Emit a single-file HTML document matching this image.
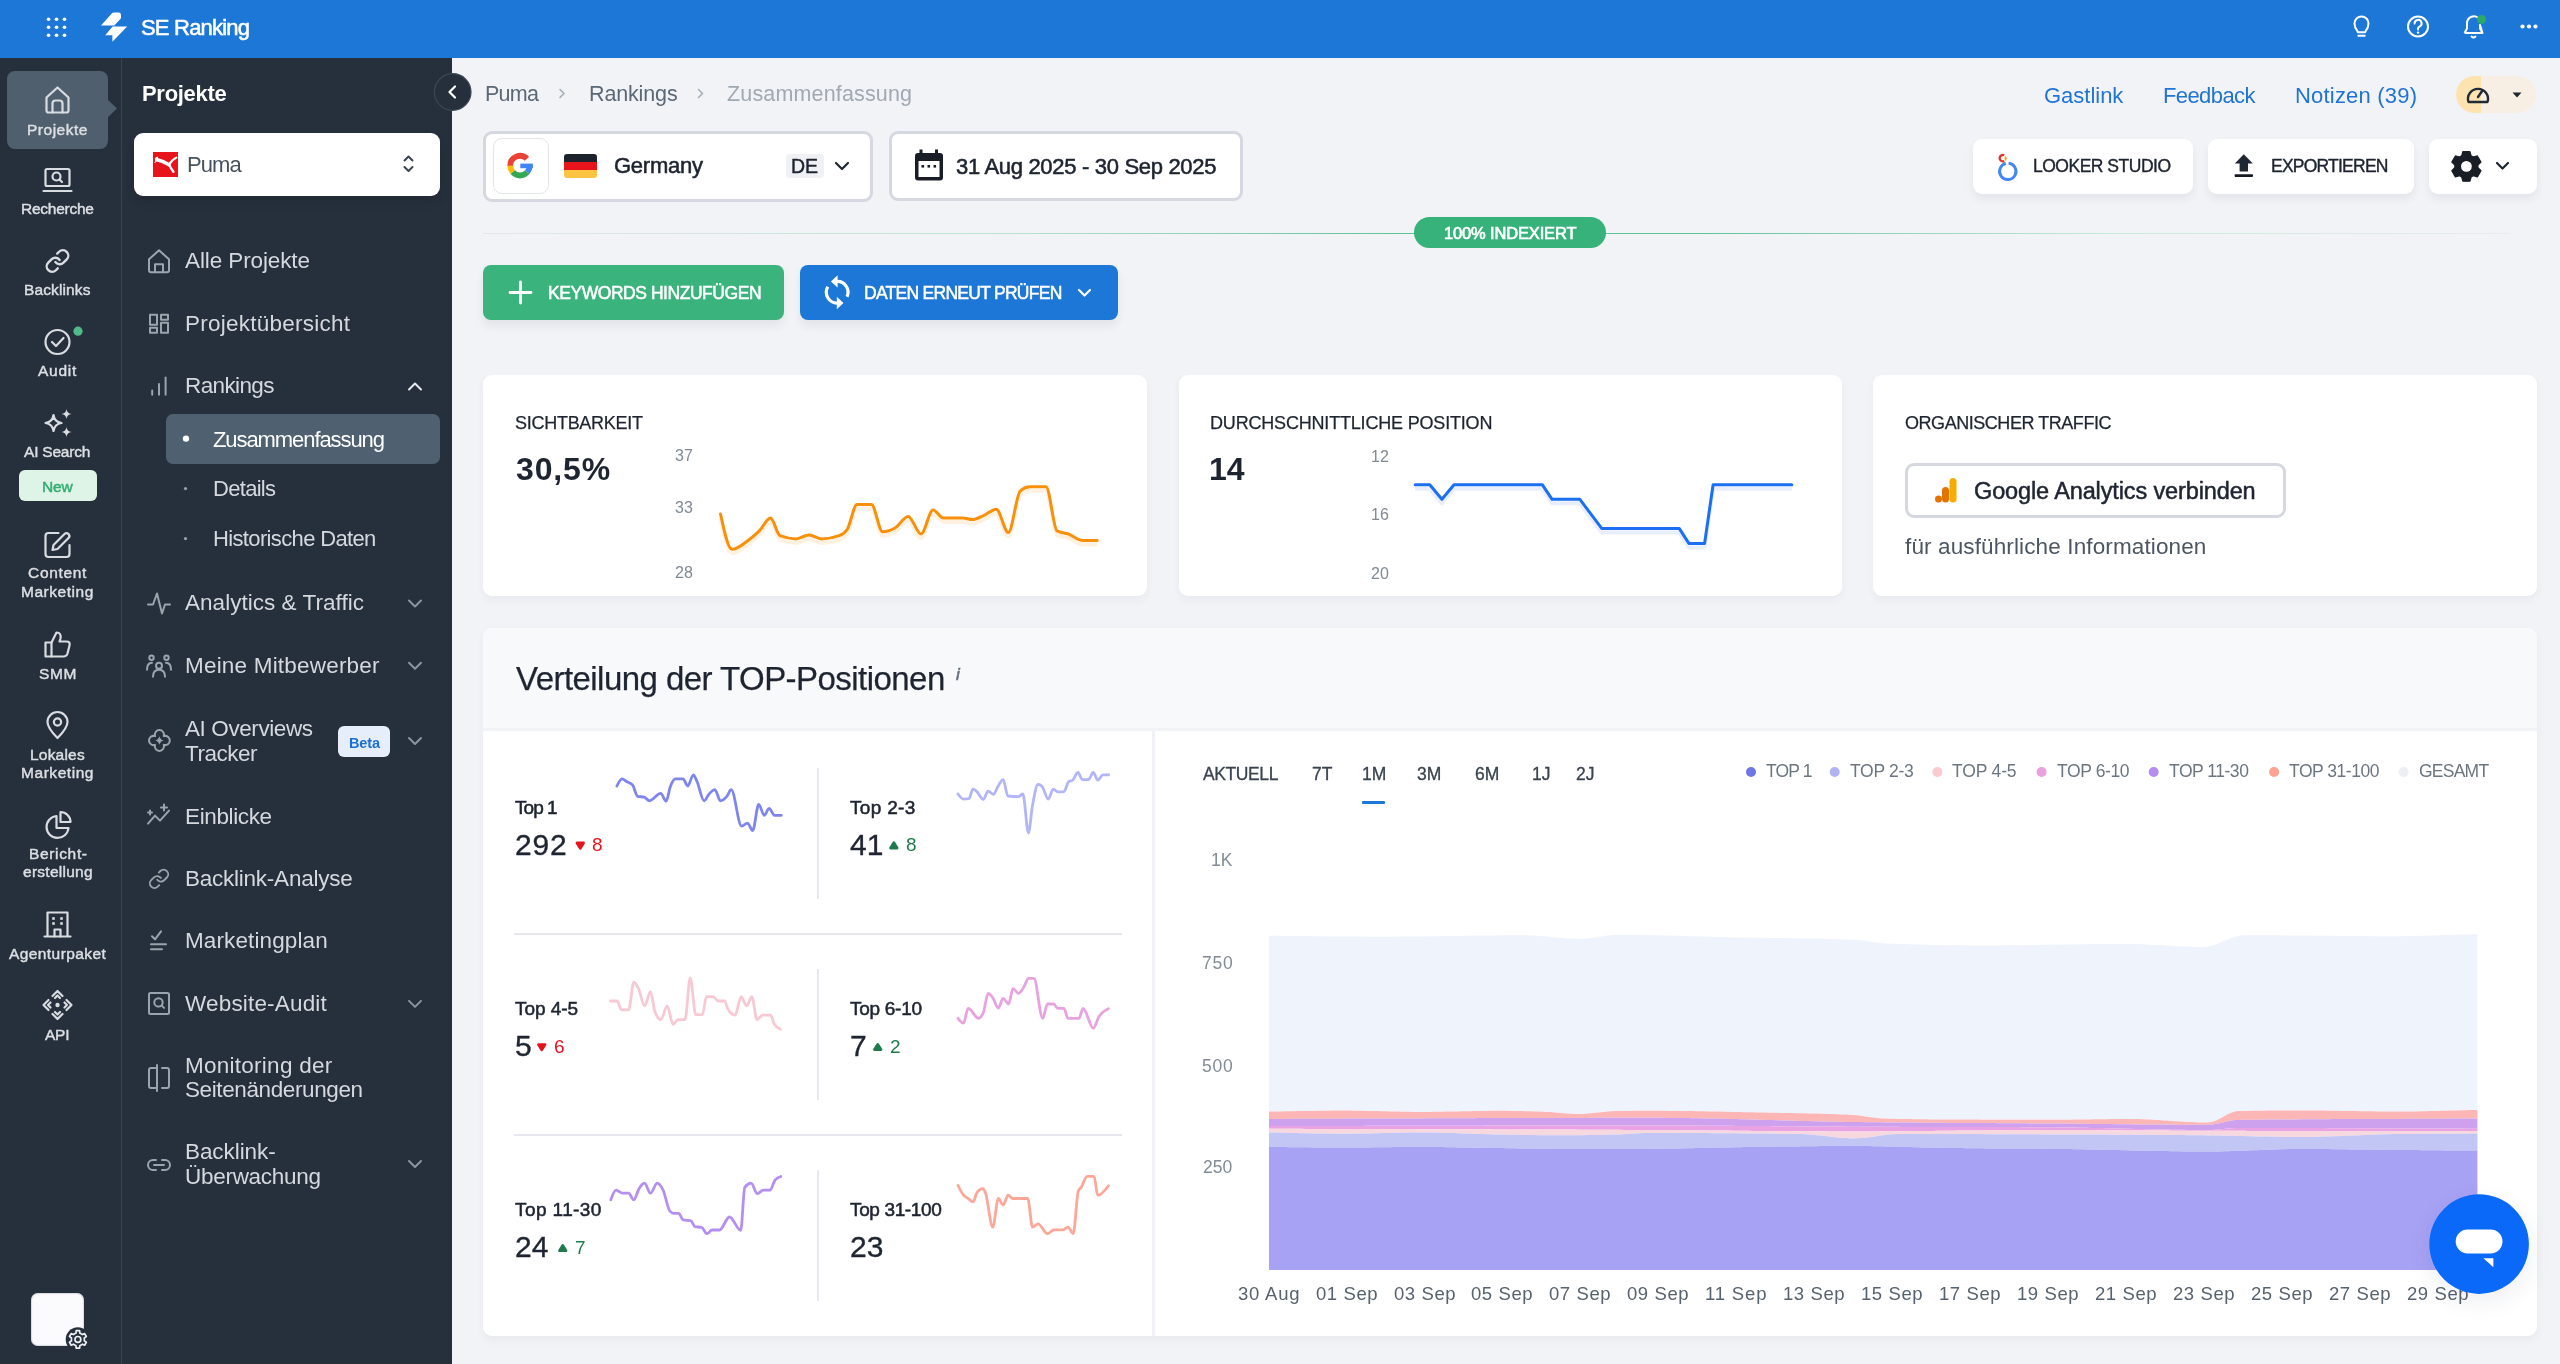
<!DOCTYPE html>
<html><head><meta charset="utf-8"><title>SE Ranking</title>
<style>
html,body{margin:0;padding:0;background:#f2f3f7;}
body{width:2560px;height:1364px;overflow:hidden;position:relative;background:#f2f3f7;font-family:"Liberation Sans",sans-serif;}
.a{position:absolute;display:block;}
.t{position:absolute;white-space:nowrap;will-change:transform;}
svg.a{overflow:visible;}
</style></head><body>
<div class="a" style="left:0px;top:0px;width:2560px;height:58px;background:#1c77d6;"></div>
<svg class="a" style="left:0px;top:0px;" width="80" height="58" viewBox="0 0 80 58"><circle cx="48.5" cy="19.3" r="1.8" fill="#fff"/><circle cx="48.5" cy="27.3" r="1.8" fill="#fff"/><circle cx="48.5" cy="35.3" r="1.8" fill="#fff"/><circle cx="56.5" cy="19.3" r="1.8" fill="#fff"/><circle cx="56.5" cy="27.3" r="1.8" fill="#fff"/><circle cx="56.5" cy="35.3" r="1.8" fill="#fff"/><circle cx="64.5" cy="19.3" r="1.8" fill="#fff"/><circle cx="64.5" cy="27.3" r="1.8" fill="#fff"/><circle cx="64.5" cy="35.3" r="1.8" fill="#fff"/></svg>
<svg class="a" style="left:0px;top:0px;" width="140" height="58" viewBox="0 0 140 58"><path d="M101,25.6 L112.2,13 Q113,12.6 114,12.6 L119,12.6 Q121,12.8 121,15 L121,17.5 Q121,18.5 120.2,19.3 L114.3,25.6 Z" fill="#fff"/><path d="M105.2,35.3 L112.6,26.4 L127.2,26.4 L112.4,41.8 L112.4,35.3 Z" fill="#fff"/></svg>
<div class="t" style="left:140.60px;top:17.48px;font-size:22px;line-height:22px;color:#fff;-webkit-text-stroke:0.55px #fff;letter-spacing:-0.800px;">SE Ranking</div>
<svg class="a" style="left:0px;top:0px;" width="2560" height="58" viewBox="0 0 2560 58"><path d="M2357.3,30.8 Q2354.5,27.5 2354.5,23.5 A7,7 0 0 1 2368.5,23.5 Q2368.5,27.5 2365.7,30.8 L2365.2,32.2 L2357.8,32.2 Z" fill="none" stroke="#fff" stroke-width="2" stroke-linejoin="round"/><line x1="2358.3" y1="35.8" x2="2364.7" y2="35.8" stroke="#fff" stroke-width="2" stroke-linecap="round"/><circle cx="2418" cy="26.5" r="10" fill="none" stroke="#fff" stroke-width="2"/><path d="M2414.6,23.6 A3.5,3.5 0 1 1 2419.5,26.6 Q2418,27.3 2418,29 L2418,29.5" fill="none" stroke="#fff" stroke-width="2" stroke-linecap="round"/><circle cx="2418" cy="32.6" r="1.2" fill="#fff"/><path d="M2464.5,33 L2467,28.5 L2467,23 A7,7 0 0 1 2478,17.5 M2480,25 L2480,28.5 L2482.5,33 Z M2464.5,33 L2482.5,33" fill="none" stroke="#fff" stroke-width="2" stroke-linejoin="round"/><path d="M2471.5,36.5 Q2473.5,38.5 2475.5,36.5" fill="none" stroke="#fff" stroke-width="1.8" stroke-linecap="round"/><circle cx="2481.5" cy="19.5" r="4.6" fill="#2aa96b"/><circle cx="2522.5" cy="26.5" r="2.1" fill="#fff"/><circle cx="2529.0" cy="26.5" r="2.1" fill="#fff"/><circle cx="2535.5" cy="26.5" r="2.1" fill="#fff"/></svg>
<div class="t" style="left:484.70px;top:83.90px;font-size:21.5px;line-height:21.5px;color:#5b6875;letter-spacing:-0.733px;">Puma</div>
<div class="t" style="left:589.00px;top:83.90px;font-size:21.5px;line-height:21.5px;color:#5b6875;letter-spacing:-0.143px;">Rankings</div>
<div class="t" style="left:727.30px;top:83.90px;font-size:21.5px;line-height:21.5px;color:#a0a9b2;letter-spacing:0.157px;">Zusammenfassung</div>
<svg class="a" style="left:0px;top:0px;" width="1000" height="120" viewBox="0 0 1000 120"><path d="M560,89.5 L564,93.5 L560,97.5" fill="none" stroke="#a6aeb6" stroke-width="1.6" stroke-linecap="round" stroke-linejoin="round"/><path d="M698.5,89.5 L702.5,93.5 L698.5,97.5" fill="none" stroke="#a6aeb6" stroke-width="1.6" stroke-linecap="round" stroke-linejoin="round"/></svg>
<div class="t" style="left:2043.50px;top:84.68px;font-size:22px;line-height:22px;color:#1f74d4;letter-spacing:-0.014px;">Gastlink</div>
<div class="t" style="left:2162.50px;top:84.68px;font-size:22px;line-height:22px;color:#1f74d4;letter-spacing:-0.600px;">Feedback</div>
<div class="t" style="left:2295.00px;top:84.68px;font-size:22px;line-height:22px;color:#1f74d4;letter-spacing:0.200px;">Notizen (39)</div>
<div class="a" style="left:2456px;top:76px;width:80px;height:37px;background:#f7efe4;border-radius:19px;overflow:hidden;"></div>
<div class="a" style="left:2456px;top:76px;width:25px;height:37px;background:#fde3b0;border-radius:19px 0 0 19px;"></div>
<svg class="a" style="left:0px;top:0px;" width="2560" height="130" viewBox="0 0 2560 130"><path d="M2468.5,102 A10,10 0 1 1 2487.5,102 Z" fill="none" stroke="#222a35" stroke-width="2.4" stroke-linejoin="round"/><path d="M2478,97 L2482.5,90.5" stroke="#222a35" stroke-width="2.4" stroke-linecap="round"/><path d="M2512.5,92.5 L2521.5,92.5 L2517,97.5 Z" fill="#1f2731"/></svg>
<div class="a" style="left:483px;top:131px;width:390px;height:71px;background:#fff;border:3px solid #d5d7e1;border-radius:9px;box-sizing:border-box;"></div>
<div class="a" style="left:493px;top:138px;width:56px;height:56px;background:#fff;border:1px solid #e3e5ec;border-radius:9px;box-sizing:border-box;"></div>
<svg class="a" style="left:0px;top:0px;" width="900" height="210" viewBox="0 0 900 210"><path d="M526.984,158.816 A9.7,9.7 0 0 0 510.3,165.8" fill="none" stroke="#ea4335" stroke-width="5.8"/><path d="M510.3,165.8 A9.7,9.7 0 0 0 512.725,172.202" fill="none" stroke="#fbbc05" stroke-width="5.8"/><path d="M512.725,172.202 A9.7,9.7 0 0 0 527.275,172.202" fill="none" stroke="#34a853" stroke-width="5.8"/><path d="M527.275,172.202 A9.7,9.7 0 0 0 529.7,165.8" fill="none" stroke="#4285f4" stroke-width="5.8"/><rect x="520.3" y="163.60000000000002" width="12.6" height="4.6" fill="#4285f4"/><clipPath id="fl"><rect x="564" y="154" width="33" height="24" rx="3"/></clipPath><g clip-path="url(#fl)"><rect x="564" y="154" width="33" height="8" fill="#1d232d"/><rect x="564" y="162" width="33" height="8" fill="#e8141b"/><rect x="564" y="170" width="33" height="8" fill="#fcc440"/></g><path d="M836,163 L842,169 L848,163" fill="none" stroke="#1d2633" stroke-width="2.2" stroke-linecap="round" stroke-linejoin="round"/></svg>
<div class="t" style="left:613.60px;top:155.28px;font-size:22px;line-height:22px;color:#1d2430;-webkit-text-stroke:0.55px #1d2430;letter-spacing:-0.250px;">Germany</div>
<div class="a" style="left:786px;top:154px;width:38px;height:24px;background:#f0f1f5;border-radius:4px;"></div>
<div class="t" style="left:791.45px;top:157.39px;font-size:19.5px;line-height:19.5px;color:#1d2430;-webkit-text-stroke:0.45px #1d2430;">DE</div>
<div class="a" style="left:889px;top:131px;width:354px;height:70px;background:#fff;border:3px solid #d5d7e1;border-radius:9px;box-sizing:border-box;"></div>
<svg class="a" style="left:0px;top:0px;" width="1000" height="210" viewBox="0 0 1000 210"><rect x="915" y="153" width="28" height="27.5" rx="3" fill="#181d26"/><rect x="918.5" y="161" width="21" height="16" fill="#fff"/><rect x="919.5" y="149.5" width="3" height="5" fill="#181d26"/><rect x="935" y="149.5" width="3" height="5" fill="#181d26"/><rect x="921.5" y="165" width="2.6" height="2.6" fill="#181d26"/><rect x="927.5" y="165" width="2.6" height="2.6" fill="#181d26"/><rect x="933.5" y="165" width="2.6" height="2.6" fill="#181d26"/></svg>
<div class="t" style="left:956.30px;top:155.78px;font-size:22px;line-height:22px;color:#1d2430;-webkit-text-stroke:0.55px #1d2430;letter-spacing:-0.312px;">31 Aug 2025 - 30 Sep 2025</div>
<div class="a" style="left:1973px;top:139px;width:220px;height:55px;background:#fff;border-radius:9px;box-shadow:0 5px 8px rgba(40,50,80,0.07);"></div>
<div class="a" style="left:2208px;top:139px;width:206px;height:55px;background:#fff;border-radius:9px;box-shadow:0 5px 8px rgba(40,50,80,0.07);"></div>
<div class="a" style="left:2429px;top:139px;width:108px;height:55px;background:#fff;border-radius:9px;box-shadow:0 5px 8px rgba(40,50,80,0.07);"></div>
<svg class="a" style="left:0px;top:0px;" width="2560" height="210" viewBox="0 0 2560 210"><path d="M2005.8,163.4 A8.2,8.2 0 1 0 2008.6,163.2" fill="none" stroke="#4285f4" stroke-width="2.9"/><path d="M2004.2,155.3 A3.2,3.2 0 1 0 2004.2,161.1" fill="none" stroke="#ea2d24" stroke-width="2.3"/><ellipse cx="2005.6" cy="158.4" rx="1.1" ry="2.2" fill="#f9a11b"/><path d="M2243.8,154.3 L2252.8,163.5 L2248,163.5 L2248,171 Q2248,171.6 2247.4,171.6 L2240.2,171.6 Q2239.6,171.6 2239.6,171 L2239.6,163.5 L2234.8,163.5 Z" fill="#1f2732"/><rect x="2234.6" y="174.2" width="18.4" height="2.7" rx="0.8" fill="#141a24"/><path d="M2461.68,155.80 L2462.85,151.62 L2469.95,151.62 L2471.12,155.80 L2473.22,157.02 L2477.43,155.94 L2480.97,162.08 L2477.94,165.19 L2477.94,167.61 L2480.97,170.72 L2477.43,176.86 L2473.22,175.78 L2471.12,177.00 L2469.95,181.18 L2462.85,181.18 L2461.68,177.00 L2459.58,175.78 L2455.37,176.86 L2451.83,170.72 L2454.86,167.61 L2454.86,165.19 L2451.83,162.08 L2455.37,155.94 L2459.58,157.02 Z" fill="#181d26" stroke="#181d26" stroke-width="1.2" stroke-linejoin="round"/><circle cx="2466.4" cy="166.4" r="5.4" fill="#fff"/><path d="M2497,163 L2502.5,168.5 L2508,163" fill="none" stroke="#1d2430" stroke-width="2.2" stroke-linecap="round" stroke-linejoin="round"/></svg>
<div class="t" style="left:2032.60px;top:158.09px;font-size:17.5px;line-height:17.5px;color:#1d2430;-webkit-text-stroke:0.4px #1d2430;letter-spacing:-0.492px;">LOOKER STUDIO</div>
<div class="t" style="left:2271.00px;top:158.09px;font-size:17.5px;line-height:17.5px;color:#1d2430;-webkit-text-stroke:0.4px #1d2430;letter-spacing:-0.770px;">EXPORTIEREN</div>
<div class="a" style="left:483px;top:233px;width:2027px;height:1px;background:linear-gradient(90deg,#e4e6ee 0%,#bfe3cf 25%,#5fc396 45%,#5fc396 60%,#c8e9d7 80%,#e9ebf1 100%);"></div>
<div class="a" style="left:1414px;top:217px;width:192px;height:31px;background:#38b27b;border-radius:16px;"></div>
<div class="t" style="left:1443.55px;top:224.53px;font-size:16.5px;line-height:16.5px;color:#ffffff;-webkit-text-stroke:0.65px #ffffff;letter-spacing:-0.154px;">100% INDEXIERT</div>
<div class="a" style="left:483px;top:265px;width:301px;height:55px;background:#3bb37d;border-radius:8px;box-shadow:0 6px 8px rgba(40,60,80,0.08);"></div>
<div class="a" style="left:800px;top:265px;width:318px;height:55px;background:#1c77d6;border-radius:8px;box-shadow:0 6px 8px rgba(40,60,80,0.08);"></div>
<svg class="a" style="left:0px;top:0px;" width="1200" height="330" viewBox="0 0 1200 330"><path d="M520.5,282 L520.5,303 M510,292.5 L531,292.5" stroke="#fff" stroke-width="2.8" stroke-linecap="round"/><path d="M836.5,281.4 A10.8,10.8 0 0 1 847,296.8" fill="none" stroke="#fff" stroke-width="3.2"/><path d="M827.8,286.8 A10.8,10.8 0 0 0 838,303" fill="none" stroke="#fff" stroke-width="3.2"/><path d="M830.9,281.4 L837.6,275.2 L837.6,287.6 Z" fill="#fff"/><path d="M843.5,303 L836.8,296.8 L836.8,309.2 Z" fill="#fff"/><path d="M1079,290 L1084.5,295.5 L1090,290" fill="none" stroke="#fff" stroke-width="2.2" stroke-linecap="round" stroke-linejoin="round"/></svg>
<div class="t" style="left:548.00px;top:284.79px;font-size:17.5px;line-height:17.5px;color:#ffffff;-webkit-text-stroke:0.5px #ffffff;letter-spacing:-0.450px;">KEYWORDS HINZUFÜGEN</div>
<div class="t" style="left:864.00px;top:284.79px;font-size:17.5px;line-height:17.5px;color:#ffffff;-webkit-text-stroke:0.5px #ffffff;letter-spacing:-0.722px;">DATEN ERNEUT PRÜFEN</div>
<div class="a" style="left:483px;top:375px;width:664px;height:221px;background:#fff;border-radius:9px;box-shadow:0 4px 8px rgba(40,50,80,0.05);"></div>
<div class="a" style="left:1179px;top:375px;width:663px;height:221px;background:#fff;border-radius:9px;box-shadow:0 4px 8px rgba(40,50,80,0.05);"></div>
<div class="a" style="left:1873px;top:375px;width:664px;height:221px;background:#fff;border-radius:9px;box-shadow:0 4px 8px rgba(40,50,80,0.05);"></div>
<div class="t" style="left:515.10px;top:413.66px;font-size:18px;line-height:18px;color:#1e2531;-webkit-text-stroke:0.25px #1e2531;letter-spacing:-0.273px;">SICHTBARKEIT</div>
<div class="t" style="left:515.50px;top:453.21px;font-size:32px;line-height:32px;color:#1e2531;font-weight:700;letter-spacing:0.875px;">30,5%</div>
<div class="t" style="left:675.20px;top:447.96px;font-size:16px;line-height:16px;color:#7f8a94;">37</div>
<div class="t" style="left:675.20px;top:500.26px;font-size:16px;line-height:16px;color:#7f8a94;">33</div>
<div class="t" style="left:675.20px;top:565.36px;font-size:16px;line-height:16px;color:#7f8a94;">28</div>
<svg class="a" style="left:0px;top:0px;" width="1200" height="600" viewBox="0 0 1200 600"><path d="M720.5,514.0 C724.3,531.6 728.2,549.3 732.0,549.3 C737.3,549.3 742.7,544.4 748.0,540.5 C751.8,537.8 755.5,534.7 759.3,530.9 C763.0,527.2 766.8,518.0 770.5,518.0 C773.7,518.0 776.8,534.4 780.0,535.7 C785.3,537.8 790.7,538.9 796.0,538.9 C800.3,538.9 804.6,534.9 808.9,534.9 C813.2,534.9 817.4,538.9 821.7,538.9 C827.6,538.9 833.4,537.8 839.3,535.7 C842.0,534.7 844.6,533.6 847.3,529.3 C850.5,524.1 853.8,504.4 857.0,504.4 C861.8,504.4 866.6,504.4 871.4,504.4 C875.1,504.4 878.9,531.7 882.6,531.7 C886.9,531.7 891.1,530.2 895.4,527.7 C899.7,525.1 903.9,516.4 908.2,516.4 C912.5,516.4 916.7,534.0 921.0,534.0 C925.0,534.0 929.0,510.0 933.0,510.0 C936.5,510.0 939.9,518.0 943.4,518.0 C949.8,518.0 956.3,518.0 962.7,518.0 C965.9,518.0 969.1,519.6 972.3,519.6 C976.5,519.6 980.8,516.7 985.0,514.8 C988.8,513.1 992.5,509.2 996.3,509.2 C1000.3,509.2 1004.3,532.5 1008.3,532.5 C1012.3,532.5 1016.3,494.1 1020.3,490.8 C1023.5,488.1 1026.8,486.8 1030.0,486.8 C1035.3,486.8 1040.7,486.8 1046.0,486.8 C1049.7,486.8 1053.4,528.9 1057.1,530.9 C1060.9,533.0 1064.6,532.7 1068.4,534.0 C1073.2,535.7 1078.0,540.5 1082.8,540.5 C1087.6,540.5 1092.4,540.5 1097.2,540.5" fill="none" stroke="#fef1e0" stroke-width="4" transform="translate(0,4)" stroke-linejoin="round"/><path d="M720.5,514.0 C724.3,531.6 728.2,549.3 732.0,549.3 C737.3,549.3 742.7,544.4 748.0,540.5 C751.8,537.8 755.5,534.7 759.3,530.9 C763.0,527.2 766.8,518.0 770.5,518.0 C773.7,518.0 776.8,534.4 780.0,535.7 C785.3,537.8 790.7,538.9 796.0,538.9 C800.3,538.9 804.6,534.9 808.9,534.9 C813.2,534.9 817.4,538.9 821.7,538.9 C827.6,538.9 833.4,537.8 839.3,535.7 C842.0,534.7 844.6,533.6 847.3,529.3 C850.5,524.1 853.8,504.4 857.0,504.4 C861.8,504.4 866.6,504.4 871.4,504.4 C875.1,504.4 878.9,531.7 882.6,531.7 C886.9,531.7 891.1,530.2 895.4,527.7 C899.7,525.1 903.9,516.4 908.2,516.4 C912.5,516.4 916.7,534.0 921.0,534.0 C925.0,534.0 929.0,510.0 933.0,510.0 C936.5,510.0 939.9,518.0 943.4,518.0 C949.8,518.0 956.3,518.0 962.7,518.0 C965.9,518.0 969.1,519.6 972.3,519.6 C976.5,519.6 980.8,516.7 985.0,514.8 C988.8,513.1 992.5,509.2 996.3,509.2 C1000.3,509.2 1004.3,532.5 1008.3,532.5 C1012.3,532.5 1016.3,494.1 1020.3,490.8 C1023.5,488.1 1026.8,486.8 1030.0,486.8 C1035.3,486.8 1040.7,486.8 1046.0,486.8 C1049.7,486.8 1053.4,528.9 1057.1,530.9 C1060.9,533.0 1064.6,532.7 1068.4,534.0 C1073.2,535.7 1078.0,540.5 1082.8,540.5 C1087.6,540.5 1092.4,540.5 1097.2,540.5" fill="none" stroke="#fa8f0a" stroke-width="3" stroke-linejoin="round" stroke-linecap="round"/></svg>
<div class="t" style="left:1209.90px;top:413.76px;font-size:18px;line-height:18px;color:#1e2531;-webkit-text-stroke:0.25px #1e2531;letter-spacing:-0.184px;">DURCHSCHNITTLICHE POSITION</div>
<div class="t" style="left:1209.40px;top:452.91px;font-size:32px;line-height:32px;color:#1e2531;font-weight:700;">14</div>
<div class="t" style="left:1371.20px;top:448.96px;font-size:16px;line-height:16px;color:#7f8a94;">12</div>
<div class="t" style="left:1371.20px;top:507.46px;font-size:16px;line-height:16px;color:#7f8a94;">16</div>
<div class="t" style="left:1371.20px;top:565.66px;font-size:16px;line-height:16px;color:#7f8a94;">20</div>
<svg class="a" style="left:0px;top:0px;" width="1900" height="600" viewBox="0 0 1900 600"><path d="M1415.2,484.8 L1429.8,484.8 L1441.9,499.3 L1454,484.8 L1542.4,484.8 L1552.1,499.3 L1579.9,499.3 L1601.7,528.4 L1679.2,528.4 L1688.9,543.4 L1704.6,543.4 L1713.1,484.8 L1791.8,484.8" fill="none" stroke="#e9eefc" stroke-width="4" transform="translate(0,4)" stroke-linejoin="round"/><path d="M1415.2,484.8 L1429.8,484.8 L1441.9,499.3 L1454,484.8 L1542.4,484.8 L1552.1,499.3 L1579.9,499.3 L1601.7,528.4 L1679.2,528.4 L1688.9,543.4 L1704.6,543.4 L1713.1,484.8 L1791.8,484.8" fill="none" stroke="#1a6ff2" stroke-width="3" stroke-linejoin="round" stroke-linecap="round"/></svg>
<div class="t" style="left:1904.60px;top:413.96px;font-size:18px;line-height:18px;color:#1e2531;-webkit-text-stroke:0.25px #1e2531;letter-spacing:-0.456px;">ORGANISCHER TRAFFIC</div>
<div class="a" style="left:1905px;top:463px;width:381px;height:55px;background:#fff;border:3px solid #d6d8e1;border-radius:9px;box-sizing:border-box;"></div>
<svg class="a" style="left:0px;top:0px;" width="2300" height="600" viewBox="0 0 2300 600"><rect x="1949.5" y="478" width="7" height="24.5" rx="3.5" fill="#f9ab00"/><rect x="1942" y="487" width="7" height="15.5" rx="3.5" fill="#e37400"/><circle cx="1938.5" cy="499" r="3.5" fill="#e37400"/></svg>
<div class="t" style="left:1974.30px;top:479.61px;font-size:23.5px;line-height:23.5px;color:#1e2531;-webkit-text-stroke:0.5px #1e2531;letter-spacing:-0.124px;">Google Analytics verbinden</div>
<div class="t" style="left:1904.60px;top:535.65px;font-size:22.5px;line-height:22.5px;color:#4b5661;letter-spacing:0.128px;">für ausführliche Informationen</div>
<div class="a" style="left:483px;top:628px;width:2054px;height:708px;background:#fff;border-radius:9px;box-shadow:0 4px 8px rgba(40,50,80,0.05);overflow:hidden;"></div>
<div class="a" style="left:483px;top:628px;width:2054px;height:102px;background:#f8f9fb;border-radius:9px 9px 0 0;"></div>
<div class="a" style="left:483px;top:728px;width:2054px;height:3px;background:#f2f3f7;"></div>
<div class="a" style="left:1152px;top:731px;width:3px;height:605px;background:#f1f2f6;"></div>
<div class="t" style="left:516.40px;top:662.27px;font-size:33px;line-height:33px;color:#1e2531;-webkit-text-stroke:0.25px #1e2531;letter-spacing:-0.546px;">Verteilung der TOP-Positionen</div>
<div class="t" style="left:956.00px;top:665.61px;font-size:17px;line-height:17px;color:#66737f;-webkit-text-stroke:0.6px #66737f;font-style:italic;">i</div>
<div class="a" style="left:514px;top:933px;width:608px;height:2px;background:#e6e7ef;"></div>
<div class="a" style="left:514px;top:1134px;width:608px;height:2px;background:#e6e7ef;"></div>
<div class="a" style="left:817px;top:768px;width:2px;height:131px;background:#e6e7ef;"></div>
<div class="a" style="left:817px;top:969px;width:2px;height:131px;background:#e6e7ef;"></div>
<div class="a" style="left:817px;top:1170px;width:2px;height:131px;background:#e6e7ef;"></div>
<div class="t" style="left:515.30px;top:797.92px;font-size:19px;line-height:19px;color:#1e2531;-webkit-text-stroke:0.55px #1e2531;letter-spacing:-0.950px;">Top 1</div>
<div class="t" style="left:515.30px;top:829.61px;font-size:30px;line-height:30px;color:#1e2531;-webkit-text-stroke:0.35px #1e2531;letter-spacing:0.800px;">292</div>
<div class="t" style="left:592.30px;top:835.22px;font-size:19px;line-height:19px;color:#e5141c;">8</div>
<div class="t" style="left:850.00px;top:797.92px;font-size:19px;line-height:19px;color:#1e2531;-webkit-text-stroke:0.55px #1e2531;letter-spacing:0.317px;">Top 2-3</div>
<div class="t" style="left:850.00px;top:829.61px;font-size:30px;line-height:30px;color:#1e2531;-webkit-text-stroke:0.35px #1e2531;">41</div>
<div class="t" style="left:905.90px;top:835.22px;font-size:19px;line-height:19px;color:#1f7a4c;">8</div>
<div class="t" style="left:515.00px;top:998.52px;font-size:19px;line-height:19px;color:#1e2531;-webkit-text-stroke:0.55px #1e2531;letter-spacing:-0.067px;">Top 4-5</div>
<div class="t" style="left:515.00px;top:1031.20px;font-size:30px;line-height:30px;color:#1e2531;-webkit-text-stroke:0.35px #1e2531;">5</div>
<div class="t" style="left:553.80px;top:1036.82px;font-size:19px;line-height:19px;color:#e5141c;">6</div>
<div class="t" style="left:850.00px;top:998.52px;font-size:19px;line-height:19px;color:#1e2531;-webkit-text-stroke:0.55px #1e2531;letter-spacing:-0.271px;">Top 6-10</div>
<div class="t" style="left:850.00px;top:1031.20px;font-size:30px;line-height:30px;color:#1e2531;-webkit-text-stroke:0.35px #1e2531;">7</div>
<div class="t" style="left:889.80px;top:1036.82px;font-size:19px;line-height:19px;color:#1f7a4c;">2</div>
<div class="t" style="left:515.00px;top:1199.92px;font-size:19px;line-height:19px;color:#1e2531;-webkit-text-stroke:0.55px #1e2531;letter-spacing:0.413px;">Top 11-30</div>
<div class="t" style="left:515.00px;top:1232.31px;font-size:30px;line-height:30px;color:#1e2531;-webkit-text-stroke:0.35px #1e2531;">24</div>
<div class="t" style="left:574.80px;top:1237.92px;font-size:19px;line-height:19px;color:#1f7a4c;">7</div>
<div class="t" style="left:850.00px;top:1199.92px;font-size:19px;line-height:19px;color:#1e2531;-webkit-text-stroke:0.55px #1e2531;letter-spacing:-0.367px;">Top 31-100</div>
<div class="t" style="left:850.00px;top:1232.31px;font-size:30px;line-height:30px;color:#1e2531;-webkit-text-stroke:0.35px #1e2531;">23</div>
<svg class="a" style="left:0px;top:0px;" width="1160" height="1364" viewBox="0 0 1160 1364"><path d="M577.0,843 L583.5,843 L580.25,848.2 Z" fill="#e5141c" stroke="#e5141c" stroke-width="2.8" stroke-linejoin="round"/><path d="M890.6,848 L897.1,848 L893.85,842.8 Z" fill="#1f7a4c" stroke="#1f7a4c" stroke-width="2.8" stroke-linejoin="round"/><path d="M538.5,1044.6 L545.0,1044.6 L541.75,1049.8 Z" fill="#e5141c" stroke="#e5141c" stroke-width="2.8" stroke-linejoin="round"/><path d="M874.5,1049.6 L881.0,1049.6 L877.75,1044.3999999999999 Z" fill="#1f7a4c" stroke="#1f7a4c" stroke-width="2.8" stroke-linejoin="round"/><path d="M559.5,1250.7 L566.0,1250.7 L562.75,1245.5 Z" fill="#1f7a4c" stroke="#1f7a4c" stroke-width="2.8" stroke-linejoin="round"/><path d="M616.9,786.0 C618.6,782.5 620.4,778.9 622.1,778.9 C623.6,778.9 625.0,780.6 626.5,781.5 C628.5,782.7 630.5,782.6 632.5,784.9 C634.2,786.9 636.0,796.0 637.7,796.4 C639.9,796.9 642.1,796.6 644.3,797.1 C646.0,797.5 647.8,800.8 649.5,800.8 C653.2,800.8 657.0,793.4 660.7,793.4 C662.5,793.4 664.4,801.2 666.2,801.2 C667.6,801.2 668.9,790.3 670.3,786.7 C672.0,782.1 673.8,778.9 675.5,778.9 C678.0,778.9 680.5,778.9 683.0,778.9 C684.6,778.9 686.2,786.0 687.8,786.0 C689.6,786.0 691.5,774.8 693.3,774.8 C694.5,774.8 695.8,778.9 697.0,781.5 C699.4,786.5 701.7,800.8 704.1,800.8 C705.7,800.8 707.3,796.0 708.9,794.2 C710.9,792.0 712.9,789.7 714.9,789.7 C716.7,789.7 718.6,800.8 720.4,800.8 C722.5,800.8 724.7,798.9 726.8,796.4 C728.3,794.7 729.7,789.7 731.2,789.7 C734.7,789.7 738.1,826.1 741.6,826.1 C743.6,826.1 745.5,823.1 747.5,823.1 C749.2,823.1 751.0,830.5 752.7,830.5 C754.7,830.5 756.7,804.5 758.7,804.5 C760.5,804.5 762.4,815.3 764.2,815.3 C765.8,815.3 767.5,808.3 769.1,808.3 C770.9,808.3 772.8,815.3 774.6,815.3 C776.8,815.3 779.1,815.3 781.3,815.3" fill="none" stroke="#7e86ee" stroke-width="2.8" stroke-linejoin="round" stroke-linecap="round"/><path d="M958.0,794.0 C959.8,796.5 961.7,799.1 963.5,799.1 C965.3,799.1 967.1,799.0 968.9,798.7 C970.3,798.5 971.6,789.2 973.0,789.2 C974.1,789.2 975.3,790.3 976.4,791.2 C978.7,793.0 981.0,799.4 983.3,799.4 C984.9,799.4 986.5,791.2 988.1,791.2 C989.9,791.2 991.7,794.3 993.5,794.3 C994.9,794.3 996.2,789.3 997.6,787.1 C999.4,784.2 1001.3,779.6 1003.1,779.6 C1004.7,779.6 1006.3,795.8 1007.9,796.0 C1011.3,796.5 1014.7,796.7 1018.1,796.7 C1019.7,796.7 1021.3,794.0 1022.9,794.0 C1024.7,794.0 1026.6,832.9 1028.4,832.9 C1029.8,832.9 1031.1,813.1 1032.5,805.6 C1034.3,795.6 1036.2,784.4 1038.0,784.4 C1039.4,784.4 1040.7,785.1 1042.1,786.4 C1044.1,788.4 1046.2,799.1 1048.2,799.1 C1049.9,799.1 1051.6,789.2 1053.3,789.2 C1054.8,789.2 1056.3,791.9 1057.8,791.9 C1059.8,791.9 1061.9,791.8 1063.9,791.6 C1065.5,791.4 1067.1,783.0 1068.7,781.7 C1070.1,780.6 1071.4,781.1 1072.8,780.0 C1074.5,778.6 1076.2,772.4 1077.9,772.4 C1079.4,772.4 1080.9,779.6 1082.4,779.6 C1084.4,779.6 1086.5,779.6 1088.5,779.6 C1090.1,779.6 1091.7,772.4 1093.3,772.4 C1094.8,772.4 1096.3,780.0 1097.8,780.0 C1099.5,780.0 1101.2,774.8 1102.9,774.8 C1104.8,774.8 1106.8,774.8 1108.7,774.8" fill="none" stroke="#b2b5f6" stroke-width="2.8" stroke-linejoin="round" stroke-linecap="round"/><path d="M610.4,1001.0 C612.6,1001.0 614.9,1001.0 617.1,1001.0 C618.6,1001.0 620.0,1009.9 621.5,1009.9 C623.9,1009.9 626.2,1009.9 628.6,1009.9 C630.3,1009.9 632.1,982.1 633.8,982.1 C635.4,982.1 637.0,985.5 638.6,988.8 C640.6,992.9 642.5,1005.8 644.5,1005.8 C646.5,1005.8 648.5,991.7 650.5,991.7 C652.0,991.7 653.4,1008.0 654.9,1011.8 C656.9,1017.0 658.9,1019.6 660.9,1019.6 C663.0,1019.6 665.1,1005.8 667.2,1005.8 C669.2,1005.8 671.1,1024.4 673.1,1024.4 C674.7,1024.4 676.4,1019.6 678.0,1019.6 C680.3,1019.6 682.7,1019.6 685.0,1019.6 C686.7,1019.6 688.5,978.0 690.2,978.0 C692.1,978.0 693.9,1014.7 695.8,1014.7 C698.0,1014.7 700.2,1014.7 702.4,1014.7 C703.8,1014.7 705.1,996.6 706.5,996.6 C708.7,996.6 711.0,996.6 713.2,996.6 C714.8,996.6 716.4,1001.0 718.0,1001.0 C720.2,1001.0 722.5,1001.0 724.7,1001.0 C725.7,1001.0 726.7,1007.1 727.7,1008.8 C730.2,1013.0 732.6,1015.1 735.1,1015.1 C737.1,1015.1 739.1,996.6 741.1,996.6 C742.9,996.6 744.8,1005.8 746.6,1005.8 C748.3,1005.8 750.1,996.6 751.8,996.6 C753.5,996.6 755.3,1019.6 757.0,1019.6 C758.9,1019.6 760.7,1015.1 762.6,1015.1 C765.2,1015.1 767.8,1015.1 770.4,1015.1 C771.8,1015.1 773.1,1022.2 774.5,1024.4 C776.5,1027.6 778.4,1028.4 780.4,1029.2" fill="none" stroke="#f8c8d3" stroke-width="2.8" stroke-linejoin="round" stroke-linecap="round"/><path d="M958.0,1018.3 C959.8,1020.7 961.7,1023.1 963.5,1023.1 C965.1,1023.1 966.6,1008.4 968.2,1008.4 C971.6,1008.4 975.1,1018.3 978.5,1018.3 C980.1,1018.3 981.7,1016.5 983.3,1012.8 C984.9,1009.1 986.5,993.4 988.1,993.4 C989.7,993.4 991.2,995.7 992.8,997.8 C994.6,1000.3 996.5,1008.1 998.3,1008.1 C999.9,1008.1 1001.5,998.5 1003.1,998.5 C1004.9,998.5 1006.8,1004.0 1008.6,1004.0 C1010.1,1004.0 1011.5,988.6 1013.0,988.6 C1014.8,988.6 1016.7,993.4 1018.5,993.4 C1020.4,993.4 1022.4,989.4 1024.3,986.2 C1025.7,984.0 1027.0,978.3 1028.4,978.3 C1030.2,978.3 1032.1,978.3 1033.9,978.3 C1036.8,978.3 1039.8,1018.3 1042.7,1018.3 C1044.3,1018.3 1045.9,1004.0 1047.5,1004.0 C1049.6,1004.0 1051.6,1004.0 1053.7,1004.0 C1055.1,1004.0 1056.4,1008.4 1057.8,1008.4 C1059.8,1008.4 1061.9,1008.4 1063.9,1008.4 C1065.3,1008.4 1066.6,1018.3 1068.0,1018.3 C1071.7,1018.3 1075.3,1018.3 1079.0,1018.3 C1080.4,1018.3 1081.7,1008.4 1083.1,1008.4 C1086.5,1008.4 1089.9,1028.2 1093.3,1028.2 C1095.1,1028.2 1097.0,1019.9 1098.8,1016.9 C1102.0,1011.7 1105.2,1010.2 1108.4,1008.7" fill="none" stroke="#e8a2e0" stroke-width="2.8" stroke-linejoin="round" stroke-linecap="round"/><path d="M610.8,1199.9 C612.5,1195.1 614.3,1190.2 616.0,1190.2 C618.1,1190.2 620.2,1193.2 622.3,1193.2 C624.4,1193.2 626.5,1193.2 628.6,1193.2 C630.3,1193.2 632.1,1199.9 633.8,1199.9 C635.5,1199.9 637.3,1191.6 639.0,1188.8 C640.8,1185.9 642.7,1183.2 644.5,1183.2 C646.5,1183.2 648.5,1193.2 650.5,1193.2 C652.7,1193.2 655.0,1183.2 657.2,1183.2 C659.2,1183.2 661.1,1186.1 663.1,1190.2 C665.3,1194.9 667.6,1208.2 669.8,1211.0 C671.0,1212.5 672.3,1213.3 673.5,1213.3 C675.2,1213.3 677.0,1213.3 678.7,1213.3 C680.2,1213.3 681.6,1219.6 683.1,1219.9 C685.6,1220.4 688.1,1220.2 690.6,1220.7 C692.1,1221.0 693.5,1226.2 695.0,1226.6 C697.2,1227.1 699.5,1226.9 701.7,1227.4 C703.4,1227.8 705.2,1233.7 706.9,1233.7 C708.6,1233.7 710.4,1230.0 712.1,1230.0 C714.6,1230.0 717.0,1230.0 719.5,1230.0 C722.8,1230.0 726.2,1217.0 729.5,1217.0 C733.2,1217.0 737.0,1230.3 740.7,1230.3 C742.1,1230.3 743.4,1189.1 744.8,1187.3 C746.9,1184.6 749.0,1183.2 751.1,1183.2 C753.2,1183.2 755.3,1193.6 757.4,1193.6 C759.4,1193.6 761.3,1190.2 763.3,1190.2 C765.5,1190.2 767.8,1190.2 770.0,1190.2 C771.7,1190.2 773.5,1181.8 775.2,1179.8 C777.1,1177.6 778.9,1177.0 780.8,1176.5" fill="none" stroke="#b48ef1" stroke-width="2.8" stroke-linejoin="round" stroke-linecap="round"/><path d="M958.0,1185.5 C959.8,1189.2 961.7,1192.9 963.5,1195.1 C965.1,1197.0 966.6,1197.4 968.2,1198.5 C969.8,1199.6 971.4,1201.9 973.0,1201.9 C974.4,1201.9 975.7,1194.0 977.1,1192.3 C979.0,1189.8 981.0,1188.6 982.9,1188.6 C983.7,1188.6 984.5,1190.5 985.3,1192.3 C987.8,1198.0 990.3,1227.2 992.8,1227.2 C994.6,1227.2 996.5,1198.5 998.3,1198.5 C999.9,1198.5 1001.5,1205.0 1003.1,1205.0 C1004.8,1205.0 1006.5,1195.1 1008.2,1195.1 C1009.7,1195.1 1011.2,1198.5 1012.7,1198.5 C1017.7,1198.5 1022.7,1198.5 1027.7,1198.5 C1029.3,1198.5 1030.9,1227.2 1032.5,1227.2 C1034.3,1227.2 1036.2,1223.8 1038.0,1223.8 C1041.2,1223.8 1044.3,1233.7 1047.5,1233.7 C1049.6,1233.7 1051.6,1229.9 1053.7,1229.9 C1056.7,1229.9 1059.6,1229.9 1062.6,1229.9 C1064.4,1229.9 1066.2,1227.2 1068.0,1227.2 C1069.7,1227.2 1071.5,1233.7 1073.2,1233.7 C1074.9,1233.7 1076.6,1195.3 1078.3,1191.0 C1079.2,1188.7 1080.1,1188.9 1081.0,1187.6 C1083.1,1184.6 1085.1,1176.3 1087.2,1176.3 C1089.5,1176.3 1091.7,1176.3 1094.0,1176.3 C1095.3,1176.3 1096.5,1195.4 1097.8,1195.4 C1101.3,1195.4 1104.9,1190.6 1108.4,1185.8" fill="none" stroke="#fca797" stroke-width="2.8" stroke-linejoin="round" stroke-linecap="round"/></svg>
<div class="t" style="left:1202.90px;top:765.79px;font-size:17.5px;line-height:17.5px;color:#38434f;-webkit-text-stroke:0.3px #38434f;letter-spacing:-0.400px;">AKTUELL</div>
<div class="t" style="left:1311.50px;top:765.79px;font-size:17.5px;line-height:17.5px;color:#38434f;-webkit-text-stroke:0.3px #38434f;">7T</div>
<div class="t" style="left:1361.90px;top:765.79px;font-size:17.5px;line-height:17.5px;color:#38434f;-webkit-text-stroke:0.3px #38434f;">1M</div>
<div class="t" style="left:1417.20px;top:765.79px;font-size:17.5px;line-height:17.5px;color:#38434f;-webkit-text-stroke:0.3px #38434f;">3M</div>
<div class="t" style="left:1474.80px;top:765.79px;font-size:17.5px;line-height:17.5px;color:#38434f;-webkit-text-stroke:0.3px #38434f;">6M</div>
<div class="t" style="left:1532.40px;top:765.79px;font-size:17.5px;line-height:17.5px;color:#38434f;-webkit-text-stroke:0.3px #38434f;">1J</div>
<div class="t" style="left:1576.20px;top:765.79px;font-size:17.5px;line-height:17.5px;color:#38434f;-webkit-text-stroke:0.3px #38434f;">2J</div>
<div class="a" style="left:1362px;top:801px;width:23px;height:3px;background:#1c77d6;border-radius:1px;"></div>
<div class="t" style="left:1766.00px;top:763.49px;font-size:17.5px;line-height:17.5px;color:#6b7681;letter-spacing:-0.875px;">TOP 1</div>
<div class="t" style="left:1849.70px;top:763.49px;font-size:17.5px;line-height:17.5px;color:#6b7681;letter-spacing:-0.300px;">TOP 2-3</div>
<div class="t" style="left:1952.40px;top:763.49px;font-size:17.5px;line-height:17.5px;color:#6b7681;letter-spacing:-0.150px;">TOP 4-5</div>
<div class="t" style="left:2056.60px;top:763.49px;font-size:17.5px;line-height:17.5px;color:#6b7681;letter-spacing:-0.386px;">TOP 6-10</div>
<div class="t" style="left:2168.70px;top:763.49px;font-size:17.5px;line-height:17.5px;color:#6b7681;letter-spacing:-0.475px;">TOP 11-30</div>
<div class="t" style="left:2289.10px;top:763.49px;font-size:17.5px;line-height:17.5px;color:#6b7681;letter-spacing:-0.467px;">TOP 31-100</div>
<div class="t" style="left:2418.60px;top:763.49px;font-size:17.5px;line-height:17.5px;color:#6b7681;letter-spacing:-0.760px;">GESAMT</div>
<svg class="a" style="left:0px;top:0px;" width="2560" height="900" viewBox="0 0 2560 900"><circle cx="1751" cy="772" r="5" fill="#7176e6"/><circle cx="1834.7" cy="772" r="5" fill="#b0b4f4"/><circle cx="1937.4" cy="772" r="5" fill="#f9cbd0"/><circle cx="2041.6" cy="772" r="5" fill="#e8a1e0"/><circle cx="2153.7" cy="772" r="5" fill="#b38df0"/><circle cx="2274.1" cy="772" r="5" fill="#fba392"/><circle cx="2403.6" cy="772" r="5" fill="#eceef5"/></svg>
<div class="t" style="left:1211.30px;top:851.69px;font-size:17.5px;line-height:17.5px;color:#828c96;">1K</div>
<div class="t" style="left:1202.00px;top:954.99px;font-size:17.5px;line-height:17.5px;color:#828c96;letter-spacing:0.750px;">750</div>
<div class="t" style="left:1201.90px;top:1058.19px;font-size:17.5px;line-height:17.5px;color:#828c96;letter-spacing:0.800px;">500</div>
<div class="t" style="left:1203.40px;top:1159.19px;font-size:17.5px;line-height:17.5px;color:#828c96;letter-spacing:0.050px;">250</div>
<div class="t" style="left:1237.65px;top:1284.84px;font-size:18.5px;line-height:18.5px;color:#56626e;letter-spacing:0.780px;">30 Aug</div>
<div class="t" style="left:1315.59px;top:1284.84px;font-size:18.5px;line-height:18.5px;color:#56626e;letter-spacing:0.580px;">01 Sep</div>
<div class="t" style="left:1393.53px;top:1284.84px;font-size:18.5px;line-height:18.5px;color:#56626e;letter-spacing:0.580px;">03 Sep</div>
<div class="t" style="left:1471.47px;top:1284.84px;font-size:18.5px;line-height:18.5px;color:#56626e;letter-spacing:0.580px;">05 Sep</div>
<div class="t" style="left:1549.41px;top:1284.84px;font-size:18.5px;line-height:18.5px;color:#56626e;letter-spacing:0.580px;">07 Sep</div>
<div class="t" style="left:1627.35px;top:1284.84px;font-size:18.5px;line-height:18.5px;color:#56626e;letter-spacing:0.580px;">09 Sep</div>
<div class="t" style="left:1705.29px;top:1284.84px;font-size:18.5px;line-height:18.5px;color:#56626e;letter-spacing:0.840px;">11 Sep</div>
<div class="t" style="left:1783.23px;top:1284.84px;font-size:18.5px;line-height:18.5px;color:#56626e;letter-spacing:0.580px;">13 Sep</div>
<div class="t" style="left:1861.17px;top:1284.84px;font-size:18.5px;line-height:18.5px;color:#56626e;letter-spacing:0.580px;">15 Sep</div>
<div class="t" style="left:1939.11px;top:1284.84px;font-size:18.5px;line-height:18.5px;color:#56626e;letter-spacing:0.580px;">17 Sep</div>
<div class="t" style="left:2017.05px;top:1284.84px;font-size:18.5px;line-height:18.5px;color:#56626e;letter-spacing:0.580px;">19 Sep</div>
<div class="t" style="left:2094.99px;top:1284.84px;font-size:18.5px;line-height:18.5px;color:#56626e;letter-spacing:0.580px;">21 Sep</div>
<div class="t" style="left:2172.93px;top:1284.84px;font-size:18.5px;line-height:18.5px;color:#56626e;letter-spacing:0.580px;">23 Sep</div>
<div class="t" style="left:2250.87px;top:1284.84px;font-size:18.5px;line-height:18.5px;color:#56626e;letter-spacing:0.580px;">25 Sep</div>
<div class="t" style="left:2328.81px;top:1284.84px;font-size:18.5px;line-height:18.5px;color:#56626e;letter-spacing:0.580px;">27 Sep</div>
<div class="t" style="left:2406.75px;top:1284.84px;font-size:18.5px;line-height:18.5px;color:#56626e;letter-spacing:0.580px;">29 Sep</div>
<svg class="a" style="left:0px;top:0px;" width="2560" height="1364" viewBox="0 0 2560 1364"><path d="M1269.0,935.7 L1273.0,935.7 L1277.1,935.8 L1281.1,935.8 L1285.1,935.9 L1289.1,935.9 L1293.2,935.9 L1297.2,936.0 L1301.2,936.0 L1305.3,936.1 L1309.3,936.1 L1313.3,936.2 L1317.3,936.2 L1321.4,936.3 L1325.4,936.3 L1329.4,936.4 L1333.4,936.4 L1337.5,936.4 L1341.5,936.5 L1345.5,936.5 L1349.6,936.5 L1353.6,936.6 L1357.6,936.6 L1361.6,936.6 L1365.7,936.7 L1369.7,936.7 L1373.7,936.7 L1377.8,936.7 L1381.8,936.7 L1385.8,936.7 L1389.8,936.7 L1393.9,936.7 L1397.9,936.7 L1401.9,936.6 L1406.0,936.6 L1410.0,936.6 L1414.0,936.5 L1418.0,936.5 L1422.1,936.4 L1426.1,936.4 L1430.1,936.3 L1434.1,936.3 L1438.2,936.2 L1442.2,936.1 L1446.2,936.1 L1450.3,936.0 L1454.3,935.9 L1458.3,935.9 L1462.3,935.8 L1466.4,935.7 L1470.4,935.7 L1474.4,935.6 L1478.5,935.6 L1482.5,935.5 L1486.5,935.5 L1490.5,935.4 L1494.6,935.4 L1498.6,935.3 L1502.6,935.3 L1506.7,935.3 L1510.7,935.2 L1514.7,935.2 L1518.7,935.2 L1522.8,935.2 L1526.8,935.3 L1530.8,935.4 L1534.8,935.6 L1538.9,935.9 L1542.9,936.3 L1546.9,936.6 L1551.0,937.0 L1555.0,937.4 L1559.0,937.8 L1563.0,938.1 L1567.1,938.4 L1571.1,938.6 L1575.1,938.8 L1579.2,938.8 L1583.2,938.7 L1587.2,938.4 L1591.2,937.9 L1595.3,937.4 L1599.3,936.8 L1603.3,936.2 L1607.4,935.6 L1611.4,935.2 L1615.4,934.8 L1619.4,934.7 L1623.5,934.7 L1627.5,934.7 L1631.5,934.8 L1635.5,934.8 L1639.6,934.9 L1643.6,934.9 L1647.6,935.0 L1651.7,935.1 L1655.7,935.2 L1659.7,935.3 L1663.7,935.4 L1667.8,935.5 L1671.8,935.6 L1675.8,935.7 L1679.9,935.8 L1683.9,936.0 L1687.9,936.1 L1691.9,936.2 L1696.0,936.3 L1700.0,936.5 L1704.0,936.6 L1708.1,936.7 L1712.1,936.8 L1716.1,936.9 L1720.1,937.0 L1724.2,937.1 L1728.2,937.2 L1732.2,937.3 L1736.2,937.4 L1740.3,937.5 L1744.3,937.5 L1748.3,937.6 L1752.4,937.7 L1756.4,937.7 L1760.4,937.8 L1764.4,937.8 L1768.5,937.9 L1772.5,937.9 L1776.5,938.0 L1780.6,938.0 L1784.6,938.1 L1788.6,938.2 L1792.6,938.2 L1796.7,938.3 L1800.7,938.3 L1804.7,938.4 L1808.8,938.5 L1812.8,938.6 L1816.8,938.6 L1820.8,938.7 L1824.9,938.8 L1828.9,938.9 L1832.9,939.0 L1836.9,939.2 L1841.0,939.3 L1845.0,939.4 L1849.0,939.6 L1853.1,939.7 L1857.1,939.9 L1861.1,940.3 L1865.1,940.8 L1869.2,941.4 L1873.2,942.0 L1877.2,942.6 L1881.3,943.1 L1885.3,943.4 L1889.3,943.5 L1893.3,943.7 L1897.4,943.8 L1901.4,944.0 L1905.4,944.1 L1909.5,944.2 L1913.5,944.4 L1917.5,944.5 L1921.5,944.6 L1925.6,944.7 L1929.6,944.8 L1933.6,944.9 L1937.6,945.0 L1941.7,945.0 L1945.7,945.1 L1949.7,945.2 L1953.8,945.2 L1957.8,945.3 L1961.8,945.3 L1965.8,945.3 L1969.9,945.4 L1973.9,945.4 L1977.9,945.4 L1982.0,945.4 L1986.0,945.4 L1990.0,945.4 L1994.0,945.4 L1998.1,945.4 L2002.1,945.3 L2006.1,945.3 L2010.2,945.3 L2014.2,945.2 L2018.2,945.2 L2022.2,945.1 L2026.3,945.1 L2030.3,945.0 L2034.3,945.0 L2038.3,944.9 L2042.4,944.8 L2046.4,944.8 L2050.4,944.7 L2054.5,944.7 L2058.5,944.6 L2062.5,944.5 L2066.5,944.5 L2070.6,944.4 L2074.6,944.3 L2078.6,944.3 L2082.7,944.2 L2086.7,944.2 L2090.7,944.1 L2094.7,944.1 L2098.8,944.0 L2102.8,944.0 L2106.8,944.0 L2110.9,943.9 L2114.9,943.9 L2118.9,943.9 L2122.9,943.9 L2127.0,943.9 L2131.0,943.9 L2135.0,944.0 L2139.0,944.1 L2143.1,944.3 L2147.1,944.4 L2151.1,944.7 L2155.2,944.9 L2159.2,945.1 L2163.2,945.3 L2167.2,945.6 L2171.3,945.8 L2175.3,946.1 L2179.3,946.3 L2183.4,946.5 L2187.4,946.7 L2191.4,946.8 L2195.4,946.9 L2199.5,947.0 L2203.5,947.0 L2207.5,946.6 L2211.6,945.8 L2215.6,944.4 L2219.6,942.9 L2223.6,941.1 L2227.7,939.4 L2231.7,937.8 L2235.7,936.5 L2239.7,935.6 L2243.8,935.2 L2247.8,935.2 L2251.8,935.2 L2255.9,935.2 L2259.9,935.2 L2263.9,935.2 L2267.9,935.3 L2272.0,935.3 L2276.0,935.3 L2280.0,935.3 L2284.1,935.4 L2288.1,935.4 L2292.1,935.4 L2296.1,935.5 L2300.2,935.5 L2304.2,935.6 L2308.2,935.6 L2312.3,935.6 L2316.3,935.7 L2320.3,935.7 L2324.3,935.8 L2328.4,935.8 L2332.4,935.8 L2336.4,935.9 L2340.4,935.9 L2344.5,936.0 L2348.5,936.0 L2352.5,936.0 L2356.6,936.1 L2360.6,936.1 L2364.6,936.1 L2368.6,936.1 L2372.7,936.2 L2376.7,936.2 L2380.7,936.2 L2384.8,936.2 L2388.8,936.2 L2392.8,936.2 L2396.8,936.2 L2400.9,936.2 L2404.9,936.1 L2408.9,936.1 L2413.0,936.0 L2417.0,935.9 L2421.0,935.8 L2425.0,935.7 L2429.1,935.6 L2433.1,935.5 L2437.1,935.4 L2441.1,935.3 L2445.2,935.1 L2449.2,935.0 L2453.2,934.9 L2457.3,934.8 L2461.3,934.6 L2465.3,934.5 L2469.3,934.4 L2473.4,934.3 L2477.4,934.2 L2477.4,1109.9 L2473.4,1110.0 L2469.3,1110.1 L2465.3,1110.2 L2461.3,1110.3 L2457.3,1110.4 L2453.2,1110.5 L2449.2,1110.6 L2445.2,1110.7 L2441.1,1110.8 L2437.1,1110.9 L2433.1,1111.0 L2429.1,1111.1 L2425.0,1111.2 L2421.0,1111.3 L2417.0,1111.4 L2413.0,1111.4 L2408.9,1111.5 L2404.9,1111.5 L2400.9,1111.5 L2396.8,1111.5 L2392.8,1111.5 L2388.8,1111.5 L2384.8,1111.4 L2380.7,1111.4 L2376.7,1111.4 L2372.7,1111.3 L2368.6,1111.3 L2364.6,1111.2 L2360.6,1111.2 L2356.6,1111.1 L2352.5,1111.0 L2348.5,1111.0 L2344.5,1110.9 L2340.4,1110.9 L2336.4,1110.8 L2332.4,1110.7 L2328.4,1110.7 L2324.3,1110.6 L2320.3,1110.6 L2316.3,1110.6 L2312.3,1110.5 L2308.2,1110.5 L2304.2,1110.5 L2300.2,1110.5 L2296.1,1110.5 L2292.1,1110.5 L2288.1,1110.5 L2284.1,1110.5 L2280.0,1110.6 L2276.0,1110.6 L2272.0,1110.6 L2267.9,1110.6 L2263.9,1110.7 L2259.9,1110.7 L2255.9,1110.8 L2251.8,1110.8 L2247.8,1110.9 L2243.8,1110.9 L2239.7,1111.0 L2235.7,1111.2 L2231.7,1112.4 L2227.7,1114.2 L2223.6,1116.4 L2219.6,1118.7 L2215.6,1120.7 L2211.6,1122.1 L2207.5,1122.5 L2203.5,1122.5 L2199.5,1122.4 L2195.4,1122.3 L2191.4,1122.1 L2187.4,1121.9 L2183.4,1121.7 L2179.3,1121.4 L2175.3,1121.2 L2171.3,1120.9 L2167.2,1120.6 L2163.2,1120.4 L2159.2,1120.1 L2155.2,1119.9 L2151.1,1119.6 L2147.1,1119.4 L2143.1,1119.3 L2139.0,1119.1 L2135.0,1119.0 L2131.0,1119.0 L2127.0,1119.0 L2122.9,1119.0 L2118.9,1119.0 L2114.9,1119.1 L2110.9,1119.1 L2106.8,1119.2 L2102.8,1119.2 L2098.8,1119.3 L2094.7,1119.3 L2090.7,1119.4 L2086.7,1119.4 L2082.7,1119.5 L2078.6,1119.6 L2074.6,1119.6 L2070.6,1119.7 L2066.5,1119.7 L2062.5,1119.7 L2058.5,1119.8 L2054.5,1119.8 L2050.4,1119.8 L2046.4,1119.8 L2042.4,1119.8 L2038.3,1119.8 L2034.3,1119.8 L2030.3,1119.8 L2026.3,1119.8 L2022.2,1119.8 L2018.2,1119.8 L2014.2,1119.8 L2010.2,1119.8 L2006.1,1119.7 L2002.1,1119.7 L1998.1,1119.7 L1994.0,1119.7 L1990.0,1119.7 L1986.0,1119.7 L1982.0,1119.7 L1977.9,1119.6 L1973.9,1119.6 L1969.9,1119.6 L1965.8,1119.6 L1961.8,1119.6 L1957.8,1119.5 L1953.8,1119.5 L1949.7,1119.5 L1945.7,1119.5 L1941.7,1119.4 L1937.6,1119.4 L1933.6,1119.4 L1929.6,1119.4 L1925.6,1119.3 L1921.5,1119.3 L1917.5,1119.2 L1913.5,1119.2 L1909.5,1119.1 L1905.4,1119.1 L1901.4,1119.0 L1897.4,1118.9 L1893.3,1118.8 L1889.3,1118.7 L1885.3,1118.6 L1881.3,1118.5 L1877.2,1118.1 L1873.2,1117.6 L1869.2,1117.0 L1865.1,1116.4 L1861.1,1115.8 L1857.1,1115.3 L1853.1,1115.0 L1849.0,1114.8 L1845.0,1114.6 L1841.0,1114.4 L1836.9,1114.3 L1832.9,1114.1 L1828.9,1114.0 L1824.9,1113.8 L1820.8,1113.7 L1816.8,1113.6 L1812.8,1113.5 L1808.8,1113.4 L1804.7,1113.3 L1800.7,1113.3 L1796.7,1113.2 L1792.6,1113.1 L1788.6,1113.0 L1784.6,1113.0 L1780.6,1112.9 L1776.5,1112.8 L1772.5,1112.7 L1768.5,1112.7 L1764.4,1112.6 L1760.4,1112.5 L1756.4,1112.4 L1752.4,1112.3 L1748.3,1112.2 L1744.3,1112.2 L1740.3,1112.1 L1736.2,1112.0 L1732.2,1111.9 L1728.2,1111.8 L1724.2,1111.7 L1720.1,1111.6 L1716.1,1111.6 L1712.1,1111.5 L1708.1,1111.4 L1704.0,1111.3 L1700.0,1111.3 L1696.0,1111.2 L1691.9,1111.1 L1687.9,1111.1 L1683.9,1111.0 L1679.9,1111.0 L1675.8,1110.9 L1671.8,1110.9 L1667.8,1110.9 L1663.7,1110.8 L1659.7,1110.8 L1655.7,1110.8 L1651.7,1110.8 L1647.6,1110.8 L1643.6,1110.8 L1639.6,1110.8 L1635.5,1110.8 L1631.5,1110.9 L1627.5,1110.9 L1623.5,1110.9 L1619.4,1111.0 L1615.4,1111.0 L1611.4,1111.2 L1607.4,1111.5 L1603.3,1111.9 L1599.3,1112.4 L1595.3,1112.8 L1591.2,1113.2 L1587.2,1113.6 L1583.2,1113.9 L1579.2,1114.0 L1575.1,1114.0 L1571.1,1113.8 L1567.1,1113.5 L1563.0,1113.2 L1559.0,1112.8 L1555.0,1112.5 L1551.0,1112.1 L1546.9,1111.9 L1542.9,1111.7 L1538.9,1111.6 L1534.8,1111.4 L1530.8,1111.3 L1526.8,1111.2 L1522.8,1111.1 L1518.7,1111.0 L1514.7,1110.9 L1510.7,1110.9 L1506.7,1110.8 L1502.6,1110.8 L1498.6,1110.8 L1494.6,1110.8 L1490.5,1110.8 L1486.5,1110.9 L1482.5,1110.9 L1478.5,1111.0 L1474.4,1111.1 L1470.4,1111.2 L1466.4,1111.2 L1462.3,1111.3 L1458.3,1111.4 L1454.3,1111.5 L1450.3,1111.6 L1446.2,1111.6 L1442.2,1111.7 L1438.2,1111.8 L1434.1,1111.8 L1430.1,1111.9 L1426.1,1111.9 L1422.1,1111.9 L1418.0,1111.9 L1414.0,1111.9 L1410.0,1111.8 L1406.0,1111.8 L1401.9,1111.7 L1397.9,1111.6 L1393.9,1111.5 L1389.8,1111.4 L1385.8,1111.3 L1381.8,1111.2 L1377.8,1111.1 L1373.7,1111.0 L1369.7,1110.9 L1365.7,1110.9 L1361.6,1110.8 L1357.6,1110.7 L1353.6,1110.7 L1349.6,1110.6 L1345.5,1110.6 L1341.5,1110.6 L1337.5,1110.6 L1333.4,1110.6 L1329.4,1110.7 L1325.4,1110.7 L1321.4,1110.7 L1317.3,1110.8 L1313.3,1110.9 L1309.3,1110.9 L1305.3,1111.0 L1301.2,1111.1 L1297.2,1111.1 L1293.2,1111.2 L1289.1,1111.3 L1285.1,1111.3 L1281.1,1111.4 L1277.1,1111.5 L1273.0,1111.5 L1269.0,1111.6 Z" fill="#eff3fc"/><path d="M1269.0,1111.6 L1273.0,1111.5 L1277.1,1111.5 L1281.1,1111.4 L1285.1,1111.3 L1289.1,1111.3 L1293.2,1111.2 L1297.2,1111.1 L1301.2,1111.1 L1305.3,1111.0 L1309.3,1110.9 L1313.3,1110.9 L1317.3,1110.8 L1321.4,1110.7 L1325.4,1110.7 L1329.4,1110.7 L1333.4,1110.6 L1337.5,1110.6 L1341.5,1110.6 L1345.5,1110.6 L1349.6,1110.6 L1353.6,1110.7 L1357.6,1110.7 L1361.6,1110.8 L1365.7,1110.9 L1369.7,1110.9 L1373.7,1111.0 L1377.8,1111.1 L1381.8,1111.2 L1385.8,1111.3 L1389.8,1111.4 L1393.9,1111.5 L1397.9,1111.6 L1401.9,1111.7 L1406.0,1111.8 L1410.0,1111.8 L1414.0,1111.9 L1418.0,1111.9 L1422.1,1111.9 L1426.1,1111.9 L1430.1,1111.9 L1434.1,1111.8 L1438.2,1111.8 L1442.2,1111.7 L1446.2,1111.6 L1450.3,1111.6 L1454.3,1111.5 L1458.3,1111.4 L1462.3,1111.3 L1466.4,1111.2 L1470.4,1111.2 L1474.4,1111.1 L1478.5,1111.0 L1482.5,1110.9 L1486.5,1110.9 L1490.5,1110.8 L1494.6,1110.8 L1498.6,1110.8 L1502.6,1110.8 L1506.7,1110.8 L1510.7,1110.9 L1514.7,1110.9 L1518.7,1111.0 L1522.8,1111.1 L1526.8,1111.2 L1530.8,1111.3 L1534.8,1111.4 L1538.9,1111.6 L1542.9,1111.7 L1546.9,1111.9 L1551.0,1112.1 L1555.0,1112.5 L1559.0,1112.8 L1563.0,1113.2 L1567.1,1113.5 L1571.1,1113.8 L1575.1,1114.0 L1579.2,1114.0 L1583.2,1113.9 L1587.2,1113.6 L1591.2,1113.2 L1595.3,1112.8 L1599.3,1112.4 L1603.3,1111.9 L1607.4,1111.5 L1611.4,1111.2 L1615.4,1111.0 L1619.4,1111.0 L1623.5,1110.9 L1627.5,1110.9 L1631.5,1110.9 L1635.5,1110.8 L1639.6,1110.8 L1643.6,1110.8 L1647.6,1110.8 L1651.7,1110.8 L1655.7,1110.8 L1659.7,1110.8 L1663.7,1110.8 L1667.8,1110.9 L1671.8,1110.9 L1675.8,1110.9 L1679.9,1111.0 L1683.9,1111.0 L1687.9,1111.1 L1691.9,1111.1 L1696.0,1111.2 L1700.0,1111.3 L1704.0,1111.3 L1708.1,1111.4 L1712.1,1111.5 L1716.1,1111.6 L1720.1,1111.6 L1724.2,1111.7 L1728.2,1111.8 L1732.2,1111.9 L1736.2,1112.0 L1740.3,1112.1 L1744.3,1112.2 L1748.3,1112.2 L1752.4,1112.3 L1756.4,1112.4 L1760.4,1112.5 L1764.4,1112.6 L1768.5,1112.7 L1772.5,1112.7 L1776.5,1112.8 L1780.6,1112.9 L1784.6,1113.0 L1788.6,1113.0 L1792.6,1113.1 L1796.7,1113.2 L1800.7,1113.3 L1804.7,1113.3 L1808.8,1113.4 L1812.8,1113.5 L1816.8,1113.6 L1820.8,1113.7 L1824.9,1113.8 L1828.9,1114.0 L1832.9,1114.1 L1836.9,1114.3 L1841.0,1114.4 L1845.0,1114.6 L1849.0,1114.8 L1853.1,1115.0 L1857.1,1115.3 L1861.1,1115.8 L1865.1,1116.4 L1869.2,1117.0 L1873.2,1117.6 L1877.2,1118.1 L1881.3,1118.5 L1885.3,1118.6 L1889.3,1118.7 L1893.3,1118.8 L1897.4,1118.9 L1901.4,1119.0 L1905.4,1119.1 L1909.5,1119.1 L1913.5,1119.2 L1917.5,1119.2 L1921.5,1119.3 L1925.6,1119.3 L1929.6,1119.4 L1933.6,1119.4 L1937.6,1119.4 L1941.7,1119.4 L1945.7,1119.5 L1949.7,1119.5 L1953.8,1119.5 L1957.8,1119.5 L1961.8,1119.6 L1965.8,1119.6 L1969.9,1119.6 L1973.9,1119.6 L1977.9,1119.6 L1982.0,1119.7 L1986.0,1119.7 L1990.0,1119.7 L1994.0,1119.7 L1998.1,1119.7 L2002.1,1119.7 L2006.1,1119.7 L2010.2,1119.8 L2014.2,1119.8 L2018.2,1119.8 L2022.2,1119.8 L2026.3,1119.8 L2030.3,1119.8 L2034.3,1119.8 L2038.3,1119.8 L2042.4,1119.8 L2046.4,1119.8 L2050.4,1119.8 L2054.5,1119.8 L2058.5,1119.8 L2062.5,1119.7 L2066.5,1119.7 L2070.6,1119.7 L2074.6,1119.6 L2078.6,1119.6 L2082.7,1119.5 L2086.7,1119.4 L2090.7,1119.4 L2094.7,1119.3 L2098.8,1119.3 L2102.8,1119.2 L2106.8,1119.2 L2110.9,1119.1 L2114.9,1119.1 L2118.9,1119.0 L2122.9,1119.0 L2127.0,1119.0 L2131.0,1119.0 L2135.0,1119.0 L2139.0,1119.1 L2143.1,1119.3 L2147.1,1119.4 L2151.1,1119.6 L2155.2,1119.9 L2159.2,1120.1 L2163.2,1120.4 L2167.2,1120.6 L2171.3,1120.9 L2175.3,1121.2 L2179.3,1121.4 L2183.4,1121.7 L2187.4,1121.9 L2191.4,1122.1 L2195.4,1122.3 L2199.5,1122.4 L2203.5,1122.5 L2207.5,1122.5 L2211.6,1122.1 L2215.6,1120.7 L2219.6,1118.7 L2223.6,1116.4 L2227.7,1114.2 L2231.7,1112.4 L2235.7,1111.2 L2239.7,1111.0 L2243.8,1110.9 L2247.8,1110.9 L2251.8,1110.8 L2255.9,1110.8 L2259.9,1110.7 L2263.9,1110.7 L2267.9,1110.6 L2272.0,1110.6 L2276.0,1110.6 L2280.0,1110.6 L2284.1,1110.5 L2288.1,1110.5 L2292.1,1110.5 L2296.1,1110.5 L2300.2,1110.5 L2304.2,1110.5 L2308.2,1110.5 L2312.3,1110.5 L2316.3,1110.6 L2320.3,1110.6 L2324.3,1110.6 L2328.4,1110.7 L2332.4,1110.7 L2336.4,1110.8 L2340.4,1110.9 L2344.5,1110.9 L2348.5,1111.0 L2352.5,1111.0 L2356.6,1111.1 L2360.6,1111.2 L2364.6,1111.2 L2368.6,1111.3 L2372.7,1111.3 L2376.7,1111.4 L2380.7,1111.4 L2384.8,1111.4 L2388.8,1111.5 L2392.8,1111.5 L2396.8,1111.5 L2400.9,1111.5 L2404.9,1111.5 L2408.9,1111.5 L2413.0,1111.4 L2417.0,1111.4 L2421.0,1111.3 L2425.0,1111.2 L2429.1,1111.1 L2433.1,1111.0 L2437.1,1110.9 L2441.1,1110.8 L2445.2,1110.7 L2449.2,1110.6 L2453.2,1110.5 L2457.3,1110.4 L2461.3,1110.3 L2465.3,1110.2 L2469.3,1110.1 L2473.4,1110.0 L2477.4,1109.9 L2477.4,1118.5 L2473.4,1118.5 L2469.3,1118.5 L2465.3,1118.6 L2461.3,1118.6 L2457.3,1118.6 L2453.2,1118.6 L2449.2,1118.6 L2445.2,1118.7 L2441.1,1118.7 L2437.1,1118.7 L2433.1,1118.7 L2429.1,1118.7 L2425.0,1118.8 L2421.0,1118.8 L2417.0,1118.8 L2413.0,1118.8 L2408.9,1118.8 L2404.9,1118.8 L2400.9,1118.9 L2396.8,1118.9 L2392.8,1118.9 L2388.8,1118.9 L2384.8,1118.9 L2380.7,1118.9 L2376.7,1118.9 L2372.7,1119.0 L2368.6,1119.0 L2364.6,1119.0 L2360.6,1119.0 L2356.6,1119.0 L2352.5,1119.0 L2348.5,1119.1 L2344.5,1119.1 L2340.4,1119.1 L2336.4,1119.1 L2332.4,1119.1 L2328.4,1119.2 L2324.3,1119.2 L2320.3,1119.2 L2316.3,1119.2 L2312.3,1119.3 L2308.2,1119.3 L2304.2,1119.3 L2300.2,1119.3 L2296.1,1119.4 L2292.1,1119.4 L2288.1,1119.4 L2284.1,1119.5 L2280.0,1119.5 L2276.0,1119.5 L2272.0,1119.6 L2267.9,1119.6 L2263.9,1119.6 L2259.9,1119.7 L2255.9,1119.7 L2251.8,1119.7 L2247.8,1119.8 L2243.8,1119.8 L2239.7,1119.9 L2235.7,1120.0 L2231.7,1120.5 L2227.7,1121.3 L2223.6,1122.2 L2219.6,1123.2 L2215.6,1124.0 L2211.6,1124.6 L2207.5,1124.8 L2203.5,1124.8 L2199.5,1124.8 L2195.4,1124.8 L2191.4,1124.8 L2187.4,1124.8 L2183.4,1124.7 L2179.3,1124.7 L2175.3,1124.7 L2171.3,1124.7 L2167.2,1124.6 L2163.2,1124.6 L2159.2,1124.6 L2155.2,1124.6 L2151.1,1124.5 L2147.1,1124.5 L2143.1,1124.4 L2139.0,1124.4 L2135.0,1124.4 L2131.0,1124.3 L2127.0,1124.3 L2122.9,1124.2 L2118.9,1124.2 L2114.9,1124.2 L2110.9,1124.1 L2106.8,1124.1 L2102.8,1124.0 L2098.8,1124.0 L2094.7,1123.9 L2090.7,1123.9 L2086.7,1123.8 L2082.7,1123.8 L2078.6,1123.8 L2074.6,1123.7 L2070.6,1123.7 L2066.5,1123.6 L2062.5,1123.6 L2058.5,1123.6 L2054.5,1123.5 L2050.4,1123.5 L2046.4,1123.5 L2042.4,1123.4 L2038.3,1123.4 L2034.3,1123.4 L2030.3,1123.4 L2026.3,1123.3 L2022.2,1123.3 L2018.2,1123.3 L2014.2,1123.3 L2010.2,1123.2 L2006.1,1123.2 L2002.1,1123.2 L1998.1,1123.2 L1994.0,1123.1 L1990.0,1123.1 L1986.0,1123.1 L1982.0,1123.1 L1977.9,1123.0 L1973.9,1123.0 L1969.9,1123.0 L1965.8,1123.0 L1961.8,1123.0 L1957.8,1122.9 L1953.8,1122.9 L1949.7,1122.9 L1945.7,1122.9 L1941.7,1122.8 L1937.6,1122.8 L1933.6,1122.8 L1929.6,1122.8 L1925.6,1122.7 L1921.5,1122.7 L1917.5,1122.7 L1913.5,1122.6 L1909.5,1122.6 L1905.4,1122.6 L1901.4,1122.5 L1897.4,1122.5 L1893.3,1122.5 L1889.3,1122.4 L1885.3,1122.4 L1881.3,1122.3 L1877.2,1122.3 L1873.2,1122.3 L1869.2,1122.2 L1865.1,1122.2 L1861.1,1122.1 L1857.1,1122.1 L1853.1,1122.0 L1849.0,1121.9 L1845.0,1121.9 L1841.0,1121.8 L1836.9,1121.7 L1832.9,1121.7 L1828.9,1121.6 L1824.9,1121.5 L1820.8,1121.4 L1816.8,1121.3 L1812.8,1121.2 L1808.8,1121.1 L1804.7,1121.0 L1800.7,1120.9 L1796.7,1120.8 L1792.6,1120.7 L1788.6,1120.6 L1784.6,1120.5 L1780.6,1120.4 L1776.5,1120.2 L1772.5,1120.1 L1768.5,1120.0 L1764.4,1119.9 L1760.4,1119.8 L1756.4,1119.7 L1752.4,1119.6 L1748.3,1119.5 L1744.3,1119.3 L1740.3,1119.2 L1736.2,1119.1 L1732.2,1119.0 L1728.2,1118.9 L1724.2,1118.8 L1720.1,1118.7 L1716.1,1118.6 L1712.1,1118.6 L1708.1,1118.5 L1704.0,1118.4 L1700.0,1118.3 L1696.0,1118.2 L1691.9,1118.2 L1687.9,1118.1 L1683.9,1118.0 L1679.9,1118.0 L1675.8,1117.9 L1671.8,1117.9 L1667.8,1117.9 L1663.7,1117.8 L1659.7,1117.8 L1655.7,1117.8 L1651.7,1117.8 L1647.6,1117.8 L1643.6,1117.8 L1639.6,1117.8 L1635.5,1117.8 L1631.5,1117.8 L1627.5,1117.8 L1623.5,1117.8 L1619.4,1117.8 L1615.4,1117.8 L1611.4,1117.8 L1607.4,1117.8 L1603.3,1117.8 L1599.3,1117.8 L1595.3,1117.8 L1591.2,1117.8 L1587.2,1117.9 L1583.2,1117.9 L1579.2,1117.9 L1575.1,1117.9 L1571.1,1117.9 L1567.1,1117.9 L1563.0,1117.9 L1559.0,1117.9 L1555.0,1117.9 L1551.0,1117.9 L1546.9,1117.9 L1542.9,1117.9 L1538.9,1118.0 L1534.8,1118.0 L1530.8,1118.0 L1526.8,1118.0 L1522.8,1118.0 L1518.7,1118.0 L1514.7,1118.0 L1510.7,1118.0 L1506.7,1118.1 L1502.6,1118.1 L1498.6,1118.1 L1494.6,1118.1 L1490.5,1118.1 L1486.5,1118.1 L1482.5,1118.1 L1478.5,1118.1 L1474.4,1118.2 L1470.4,1118.2 L1466.4,1118.2 L1462.3,1118.2 L1458.3,1118.2 L1454.3,1118.2 L1450.3,1118.2 L1446.2,1118.3 L1442.2,1118.3 L1438.2,1118.3 L1434.1,1118.3 L1430.1,1118.3 L1426.1,1118.3 L1422.1,1118.4 L1418.0,1118.4 L1414.0,1118.4 L1410.0,1118.4 L1406.0,1118.4 L1401.9,1118.4 L1397.9,1118.4 L1393.9,1118.5 L1389.8,1118.5 L1385.8,1118.5 L1381.8,1118.5 L1377.8,1118.5 L1373.7,1118.5 L1369.7,1118.6 L1365.7,1118.6 L1361.6,1118.6 L1357.6,1118.6 L1353.6,1118.6 L1349.6,1118.6 L1345.5,1118.6 L1341.5,1118.7 L1337.5,1118.7 L1333.4,1118.7 L1329.4,1118.7 L1325.4,1118.7 L1321.4,1118.7 L1317.3,1118.7 L1313.3,1118.8 L1309.3,1118.8 L1305.3,1118.8 L1301.2,1118.8 L1297.2,1118.8 L1293.2,1118.8 L1289.1,1118.8 L1285.1,1118.9 L1281.1,1118.9 L1277.1,1118.9 L1273.0,1118.9 L1269.0,1118.9 Z" fill="#fdb6b6"/><path d="M1269.0,1118.9 L1273.0,1118.9 L1277.1,1118.9 L1281.1,1118.9 L1285.1,1118.9 L1289.1,1118.8 L1293.2,1118.8 L1297.2,1118.8 L1301.2,1118.8 L1305.3,1118.8 L1309.3,1118.8 L1313.3,1118.8 L1317.3,1118.7 L1321.4,1118.7 L1325.4,1118.7 L1329.4,1118.7 L1333.4,1118.7 L1337.5,1118.7 L1341.5,1118.7 L1345.5,1118.6 L1349.6,1118.6 L1353.6,1118.6 L1357.6,1118.6 L1361.6,1118.6 L1365.7,1118.6 L1369.7,1118.6 L1373.7,1118.5 L1377.8,1118.5 L1381.8,1118.5 L1385.8,1118.5 L1389.8,1118.5 L1393.9,1118.5 L1397.9,1118.4 L1401.9,1118.4 L1406.0,1118.4 L1410.0,1118.4 L1414.0,1118.4 L1418.0,1118.4 L1422.1,1118.4 L1426.1,1118.3 L1430.1,1118.3 L1434.1,1118.3 L1438.2,1118.3 L1442.2,1118.3 L1446.2,1118.3 L1450.3,1118.2 L1454.3,1118.2 L1458.3,1118.2 L1462.3,1118.2 L1466.4,1118.2 L1470.4,1118.2 L1474.4,1118.2 L1478.5,1118.1 L1482.5,1118.1 L1486.5,1118.1 L1490.5,1118.1 L1494.6,1118.1 L1498.6,1118.1 L1502.6,1118.1 L1506.7,1118.1 L1510.7,1118.0 L1514.7,1118.0 L1518.7,1118.0 L1522.8,1118.0 L1526.8,1118.0 L1530.8,1118.0 L1534.8,1118.0 L1538.9,1118.0 L1542.9,1117.9 L1546.9,1117.9 L1551.0,1117.9 L1555.0,1117.9 L1559.0,1117.9 L1563.0,1117.9 L1567.1,1117.9 L1571.1,1117.9 L1575.1,1117.9 L1579.2,1117.9 L1583.2,1117.9 L1587.2,1117.9 L1591.2,1117.8 L1595.3,1117.8 L1599.3,1117.8 L1603.3,1117.8 L1607.4,1117.8 L1611.4,1117.8 L1615.4,1117.8 L1619.4,1117.8 L1623.5,1117.8 L1627.5,1117.8 L1631.5,1117.8 L1635.5,1117.8 L1639.6,1117.8 L1643.6,1117.8 L1647.6,1117.8 L1651.7,1117.8 L1655.7,1117.8 L1659.7,1117.8 L1663.7,1117.8 L1667.8,1117.9 L1671.8,1117.9 L1675.8,1117.9 L1679.9,1118.0 L1683.9,1118.0 L1687.9,1118.1 L1691.9,1118.2 L1696.0,1118.2 L1700.0,1118.3 L1704.0,1118.4 L1708.1,1118.5 L1712.1,1118.6 L1716.1,1118.6 L1720.1,1118.7 L1724.2,1118.8 L1728.2,1118.9 L1732.2,1119.0 L1736.2,1119.1 L1740.3,1119.2 L1744.3,1119.3 L1748.3,1119.5 L1752.4,1119.6 L1756.4,1119.7 L1760.4,1119.8 L1764.4,1119.9 L1768.5,1120.0 L1772.5,1120.1 L1776.5,1120.2 L1780.6,1120.4 L1784.6,1120.5 L1788.6,1120.6 L1792.6,1120.7 L1796.7,1120.8 L1800.7,1120.9 L1804.7,1121.0 L1808.8,1121.1 L1812.8,1121.2 L1816.8,1121.3 L1820.8,1121.4 L1824.9,1121.5 L1828.9,1121.6 L1832.9,1121.7 L1836.9,1121.7 L1841.0,1121.8 L1845.0,1121.9 L1849.0,1121.9 L1853.1,1122.0 L1857.1,1122.1 L1861.1,1122.1 L1865.1,1122.2 L1869.2,1122.2 L1873.2,1122.3 L1877.2,1122.3 L1881.3,1122.3 L1885.3,1122.4 L1889.3,1122.4 L1893.3,1122.5 L1897.4,1122.5 L1901.4,1122.5 L1905.4,1122.6 L1909.5,1122.6 L1913.5,1122.6 L1917.5,1122.7 L1921.5,1122.7 L1925.6,1122.7 L1929.6,1122.8 L1933.6,1122.8 L1937.6,1122.8 L1941.7,1122.8 L1945.7,1122.9 L1949.7,1122.9 L1953.8,1122.9 L1957.8,1122.9 L1961.8,1123.0 L1965.8,1123.0 L1969.9,1123.0 L1973.9,1123.0 L1977.9,1123.0 L1982.0,1123.1 L1986.0,1123.1 L1990.0,1123.1 L1994.0,1123.1 L1998.1,1123.2 L2002.1,1123.2 L2006.1,1123.2 L2010.2,1123.2 L2014.2,1123.3 L2018.2,1123.3 L2022.2,1123.3 L2026.3,1123.3 L2030.3,1123.4 L2034.3,1123.4 L2038.3,1123.4 L2042.4,1123.4 L2046.4,1123.5 L2050.4,1123.5 L2054.5,1123.5 L2058.5,1123.6 L2062.5,1123.6 L2066.5,1123.6 L2070.6,1123.7 L2074.6,1123.7 L2078.6,1123.8 L2082.7,1123.8 L2086.7,1123.8 L2090.7,1123.9 L2094.7,1123.9 L2098.8,1124.0 L2102.8,1124.0 L2106.8,1124.1 L2110.9,1124.1 L2114.9,1124.2 L2118.9,1124.2 L2122.9,1124.2 L2127.0,1124.3 L2131.0,1124.3 L2135.0,1124.4 L2139.0,1124.4 L2143.1,1124.4 L2147.1,1124.5 L2151.1,1124.5 L2155.2,1124.6 L2159.2,1124.6 L2163.2,1124.6 L2167.2,1124.6 L2171.3,1124.7 L2175.3,1124.7 L2179.3,1124.7 L2183.4,1124.7 L2187.4,1124.8 L2191.4,1124.8 L2195.4,1124.8 L2199.5,1124.8 L2203.5,1124.8 L2207.5,1124.8 L2211.6,1124.6 L2215.6,1124.0 L2219.6,1123.2 L2223.6,1122.2 L2227.7,1121.3 L2231.7,1120.5 L2235.7,1120.0 L2239.7,1119.9 L2243.8,1119.8 L2247.8,1119.8 L2251.8,1119.7 L2255.9,1119.7 L2259.9,1119.7 L2263.9,1119.6 L2267.9,1119.6 L2272.0,1119.6 L2276.0,1119.5 L2280.0,1119.5 L2284.1,1119.5 L2288.1,1119.4 L2292.1,1119.4 L2296.1,1119.4 L2300.2,1119.3 L2304.2,1119.3 L2308.2,1119.3 L2312.3,1119.3 L2316.3,1119.2 L2320.3,1119.2 L2324.3,1119.2 L2328.4,1119.2 L2332.4,1119.1 L2336.4,1119.1 L2340.4,1119.1 L2344.5,1119.1 L2348.5,1119.1 L2352.5,1119.0 L2356.6,1119.0 L2360.6,1119.0 L2364.6,1119.0 L2368.6,1119.0 L2372.7,1119.0 L2376.7,1118.9 L2380.7,1118.9 L2384.8,1118.9 L2388.8,1118.9 L2392.8,1118.9 L2396.8,1118.9 L2400.9,1118.9 L2404.9,1118.8 L2408.9,1118.8 L2413.0,1118.8 L2417.0,1118.8 L2421.0,1118.8 L2425.0,1118.8 L2429.1,1118.7 L2433.1,1118.7 L2437.1,1118.7 L2441.1,1118.7 L2445.2,1118.7 L2449.2,1118.6 L2453.2,1118.6 L2457.3,1118.6 L2461.3,1118.6 L2465.3,1118.6 L2469.3,1118.5 L2473.4,1118.5 L2477.4,1118.5 L2477.4,1128.7 L2473.4,1128.7 L2469.3,1128.7 L2465.3,1128.7 L2461.3,1128.6 L2457.3,1128.6 L2453.2,1128.6 L2449.2,1128.6 L2445.2,1128.6 L2441.1,1128.6 L2437.1,1128.6 L2433.1,1128.6 L2429.1,1128.5 L2425.0,1128.5 L2421.0,1128.5 L2417.0,1128.5 L2413.0,1128.5 L2408.9,1128.5 L2404.9,1128.4 L2400.9,1128.4 L2396.8,1128.4 L2392.8,1128.4 L2388.8,1128.4 L2384.8,1128.4 L2380.7,1128.3 L2376.7,1128.3 L2372.7,1128.3 L2368.6,1128.3 L2364.6,1128.3 L2360.6,1128.3 L2356.6,1128.3 L2352.5,1128.2 L2348.5,1128.2 L2344.5,1128.2 L2340.4,1128.2 L2336.4,1128.2 L2332.4,1128.2 L2328.4,1128.2 L2324.3,1128.1 L2320.3,1128.1 L2316.3,1128.1 L2312.3,1128.1 L2308.2,1128.1 L2304.2,1128.1 L2300.2,1128.1 L2296.1,1128.1 L2292.1,1128.1 L2288.1,1128.1 L2284.1,1128.0 L2280.0,1128.0 L2276.0,1128.0 L2272.0,1128.0 L2267.9,1128.0 L2263.9,1128.0 L2259.9,1128.0 L2255.9,1128.0 L2251.8,1128.0 L2247.8,1128.0 L2243.8,1128.0 L2239.7,1128.0 L2235.7,1128.0 L2231.7,1128.2 L2227.7,1128.5 L2223.6,1128.9 L2219.6,1129.3 L2215.6,1129.7 L2211.6,1129.9 L2207.5,1130.0 L2203.5,1130.0 L2199.5,1130.0 L2195.4,1130.0 L2191.4,1129.9 L2187.4,1129.9 L2183.4,1129.8 L2179.3,1129.8 L2175.3,1129.7 L2171.3,1129.7 L2167.2,1129.6 L2163.2,1129.5 L2159.2,1129.4 L2155.2,1129.4 L2151.1,1129.3 L2147.1,1129.2 L2143.1,1129.1 L2139.0,1129.0 L2135.0,1128.9 L2131.0,1128.8 L2127.0,1128.7 L2122.9,1128.6 L2118.9,1128.5 L2114.9,1128.4 L2110.9,1128.3 L2106.8,1128.2 L2102.8,1128.1 L2098.8,1128.1 L2094.7,1128.0 L2090.7,1127.9 L2086.7,1127.8 L2082.7,1127.7 L2078.6,1127.7 L2074.6,1127.6 L2070.6,1127.5 L2066.5,1127.5 L2062.5,1127.4 L2058.5,1127.4 L2054.5,1127.3 L2050.4,1127.3 L2046.4,1127.3 L2042.4,1127.3 L2038.3,1127.2 L2034.3,1127.2 L2030.3,1127.2 L2026.3,1127.2 L2022.2,1127.2 L2018.2,1127.1 L2014.2,1127.1 L2010.2,1127.1 L2006.1,1127.1 L2002.1,1127.1 L1998.1,1127.1 L1994.0,1127.1 L1990.0,1127.0 L1986.0,1127.0 L1982.0,1127.0 L1977.9,1127.0 L1973.9,1127.0 L1969.9,1127.0 L1965.8,1127.0 L1961.8,1127.0 L1957.8,1127.0 L1953.8,1127.0 L1949.7,1127.0 L1945.7,1126.9 L1941.7,1126.9 L1937.6,1126.9 L1933.6,1126.9 L1929.6,1126.9 L1925.6,1126.9 L1921.5,1126.9 L1917.5,1126.9 L1913.5,1126.9 L1909.5,1126.9 L1905.4,1126.9 L1901.4,1126.9 L1897.4,1126.8 L1893.3,1126.8 L1889.3,1126.8 L1885.3,1126.8 L1881.3,1126.8 L1877.2,1126.8 L1873.2,1126.8 L1869.2,1126.8 L1865.1,1126.7 L1861.1,1126.7 L1857.1,1126.7 L1853.1,1126.7 L1849.0,1126.7 L1845.0,1126.7 L1841.0,1126.6 L1836.9,1126.6 L1832.9,1126.6 L1828.9,1126.6 L1824.9,1126.5 L1820.8,1126.5 L1816.8,1126.5 L1812.8,1126.5 L1808.8,1126.4 L1804.7,1126.4 L1800.7,1126.4 L1796.7,1126.3 L1792.6,1126.3 L1788.6,1126.3 L1784.6,1126.2 L1780.6,1126.2 L1776.5,1126.2 L1772.5,1126.2 L1768.5,1126.1 L1764.4,1126.1 L1760.4,1126.1 L1756.4,1126.0 L1752.4,1126.0 L1748.3,1126.0 L1744.3,1125.9 L1740.3,1125.9 L1736.2,1125.9 L1732.2,1125.8 L1728.2,1125.8 L1724.2,1125.8 L1720.1,1125.8 L1716.1,1125.7 L1712.1,1125.7 L1708.1,1125.7 L1704.0,1125.7 L1700.0,1125.6 L1696.0,1125.6 L1691.9,1125.6 L1687.9,1125.6 L1683.9,1125.6 L1679.9,1125.6 L1675.8,1125.5 L1671.8,1125.5 L1667.8,1125.5 L1663.7,1125.5 L1659.7,1125.5 L1655.7,1125.5 L1651.7,1125.5 L1647.6,1125.5 L1643.6,1125.5 L1639.6,1125.5 L1635.5,1125.5 L1631.5,1125.5 L1627.5,1125.5 L1623.5,1125.5 L1619.4,1125.5 L1615.4,1125.5 L1611.4,1125.5 L1607.4,1125.5 L1603.3,1125.5 L1599.3,1125.5 L1595.3,1125.5 L1591.2,1125.5 L1587.2,1125.5 L1583.2,1125.5 L1579.2,1125.5 L1575.1,1125.5 L1571.1,1125.5 L1567.1,1125.5 L1563.0,1125.5 L1559.0,1125.6 L1555.0,1125.6 L1551.0,1125.6 L1546.9,1125.6 L1542.9,1125.6 L1538.9,1125.6 L1534.8,1125.6 L1530.8,1125.6 L1526.8,1125.6 L1522.8,1125.6 L1518.7,1125.6 L1514.7,1125.6 L1510.7,1125.6 L1506.7,1125.6 L1502.6,1125.6 L1498.6,1125.6 L1494.6,1125.6 L1490.5,1125.6 L1486.5,1125.6 L1482.5,1125.7 L1478.5,1125.7 L1474.4,1125.7 L1470.4,1125.7 L1466.4,1125.7 L1462.3,1125.7 L1458.3,1125.7 L1454.3,1125.7 L1450.3,1125.7 L1446.2,1125.7 L1442.2,1125.7 L1438.2,1125.7 L1434.1,1125.7 L1430.1,1125.7 L1426.1,1125.7 L1422.1,1125.8 L1418.0,1125.8 L1414.0,1125.8 L1410.0,1125.8 L1406.0,1125.8 L1401.9,1125.8 L1397.9,1125.8 L1393.9,1125.8 L1389.8,1125.8 L1385.8,1125.8 L1381.8,1125.8 L1377.8,1125.8 L1373.7,1125.8 L1369.7,1125.8 L1365.7,1125.8 L1361.6,1125.9 L1357.6,1125.9 L1353.6,1125.9 L1349.6,1125.9 L1345.5,1125.9 L1341.5,1125.9 L1337.5,1125.9 L1333.4,1125.9 L1329.4,1125.9 L1325.4,1125.9 L1321.4,1125.9 L1317.3,1125.9 L1313.3,1125.9 L1309.3,1125.9 L1305.3,1125.9 L1301.2,1126.0 L1297.2,1126.0 L1293.2,1126.0 L1289.1,1126.0 L1285.1,1126.0 L1281.1,1126.0 L1277.1,1126.0 L1273.0,1126.0 L1269.0,1126.0 Z" fill="#cda1ee"/><path d="M1269.0,1126.0 L1273.0,1126.0 L1277.1,1126.0 L1281.1,1126.0 L1285.1,1126.0 L1289.1,1126.0 L1293.2,1126.0 L1297.2,1126.0 L1301.2,1126.0 L1305.3,1125.9 L1309.3,1125.9 L1313.3,1125.9 L1317.3,1125.9 L1321.4,1125.9 L1325.4,1125.9 L1329.4,1125.9 L1333.4,1125.9 L1337.5,1125.9 L1341.5,1125.9 L1345.5,1125.9 L1349.6,1125.9 L1353.6,1125.9 L1357.6,1125.9 L1361.6,1125.9 L1365.7,1125.8 L1369.7,1125.8 L1373.7,1125.8 L1377.8,1125.8 L1381.8,1125.8 L1385.8,1125.8 L1389.8,1125.8 L1393.9,1125.8 L1397.9,1125.8 L1401.9,1125.8 L1406.0,1125.8 L1410.0,1125.8 L1414.0,1125.8 L1418.0,1125.8 L1422.1,1125.8 L1426.1,1125.7 L1430.1,1125.7 L1434.1,1125.7 L1438.2,1125.7 L1442.2,1125.7 L1446.2,1125.7 L1450.3,1125.7 L1454.3,1125.7 L1458.3,1125.7 L1462.3,1125.7 L1466.4,1125.7 L1470.4,1125.7 L1474.4,1125.7 L1478.5,1125.7 L1482.5,1125.7 L1486.5,1125.6 L1490.5,1125.6 L1494.6,1125.6 L1498.6,1125.6 L1502.6,1125.6 L1506.7,1125.6 L1510.7,1125.6 L1514.7,1125.6 L1518.7,1125.6 L1522.8,1125.6 L1526.8,1125.6 L1530.8,1125.6 L1534.8,1125.6 L1538.9,1125.6 L1542.9,1125.6 L1546.9,1125.6 L1551.0,1125.6 L1555.0,1125.6 L1559.0,1125.6 L1563.0,1125.5 L1567.1,1125.5 L1571.1,1125.5 L1575.1,1125.5 L1579.2,1125.5 L1583.2,1125.5 L1587.2,1125.5 L1591.2,1125.5 L1595.3,1125.5 L1599.3,1125.5 L1603.3,1125.5 L1607.4,1125.5 L1611.4,1125.5 L1615.4,1125.5 L1619.4,1125.5 L1623.5,1125.5 L1627.5,1125.5 L1631.5,1125.5 L1635.5,1125.5 L1639.6,1125.5 L1643.6,1125.5 L1647.6,1125.5 L1651.7,1125.5 L1655.7,1125.5 L1659.7,1125.5 L1663.7,1125.5 L1667.8,1125.5 L1671.8,1125.5 L1675.8,1125.5 L1679.9,1125.6 L1683.9,1125.6 L1687.9,1125.6 L1691.9,1125.6 L1696.0,1125.6 L1700.0,1125.6 L1704.0,1125.7 L1708.1,1125.7 L1712.1,1125.7 L1716.1,1125.7 L1720.1,1125.8 L1724.2,1125.8 L1728.2,1125.8 L1732.2,1125.8 L1736.2,1125.9 L1740.3,1125.9 L1744.3,1125.9 L1748.3,1126.0 L1752.4,1126.0 L1756.4,1126.0 L1760.4,1126.1 L1764.4,1126.1 L1768.5,1126.1 L1772.5,1126.2 L1776.5,1126.2 L1780.6,1126.2 L1784.6,1126.2 L1788.6,1126.3 L1792.6,1126.3 L1796.7,1126.3 L1800.7,1126.4 L1804.7,1126.4 L1808.8,1126.4 L1812.8,1126.5 L1816.8,1126.5 L1820.8,1126.5 L1824.9,1126.5 L1828.9,1126.6 L1832.9,1126.6 L1836.9,1126.6 L1841.0,1126.6 L1845.0,1126.7 L1849.0,1126.7 L1853.1,1126.7 L1857.1,1126.7 L1861.1,1126.7 L1865.1,1126.7 L1869.2,1126.8 L1873.2,1126.8 L1877.2,1126.8 L1881.3,1126.8 L1885.3,1126.8 L1889.3,1126.8 L1893.3,1126.8 L1897.4,1126.8 L1901.4,1126.9 L1905.4,1126.9 L1909.5,1126.9 L1913.5,1126.9 L1917.5,1126.9 L1921.5,1126.9 L1925.6,1126.9 L1929.6,1126.9 L1933.6,1126.9 L1937.6,1126.9 L1941.7,1126.9 L1945.7,1126.9 L1949.7,1127.0 L1953.8,1127.0 L1957.8,1127.0 L1961.8,1127.0 L1965.8,1127.0 L1969.9,1127.0 L1973.9,1127.0 L1977.9,1127.0 L1982.0,1127.0 L1986.0,1127.0 L1990.0,1127.0 L1994.0,1127.1 L1998.1,1127.1 L2002.1,1127.1 L2006.1,1127.1 L2010.2,1127.1 L2014.2,1127.1 L2018.2,1127.1 L2022.2,1127.2 L2026.3,1127.2 L2030.3,1127.2 L2034.3,1127.2 L2038.3,1127.2 L2042.4,1127.3 L2046.4,1127.3 L2050.4,1127.3 L2054.5,1127.3 L2058.5,1127.4 L2062.5,1127.4 L2066.5,1127.5 L2070.6,1127.5 L2074.6,1127.6 L2078.6,1127.7 L2082.7,1127.7 L2086.7,1127.8 L2090.7,1127.9 L2094.7,1128.0 L2098.8,1128.1 L2102.8,1128.1 L2106.8,1128.2 L2110.9,1128.3 L2114.9,1128.4 L2118.9,1128.5 L2122.9,1128.6 L2127.0,1128.7 L2131.0,1128.8 L2135.0,1128.9 L2139.0,1129.0 L2143.1,1129.1 L2147.1,1129.2 L2151.1,1129.3 L2155.2,1129.4 L2159.2,1129.4 L2163.2,1129.5 L2167.2,1129.6 L2171.3,1129.7 L2175.3,1129.7 L2179.3,1129.8 L2183.4,1129.8 L2187.4,1129.9 L2191.4,1129.9 L2195.4,1130.0 L2199.5,1130.0 L2203.5,1130.0 L2207.5,1130.0 L2211.6,1129.9 L2215.6,1129.7 L2219.6,1129.3 L2223.6,1128.9 L2227.7,1128.5 L2231.7,1128.2 L2235.7,1128.0 L2239.7,1128.0 L2243.8,1128.0 L2247.8,1128.0 L2251.8,1128.0 L2255.9,1128.0 L2259.9,1128.0 L2263.9,1128.0 L2267.9,1128.0 L2272.0,1128.0 L2276.0,1128.0 L2280.0,1128.0 L2284.1,1128.0 L2288.1,1128.1 L2292.1,1128.1 L2296.1,1128.1 L2300.2,1128.1 L2304.2,1128.1 L2308.2,1128.1 L2312.3,1128.1 L2316.3,1128.1 L2320.3,1128.1 L2324.3,1128.1 L2328.4,1128.2 L2332.4,1128.2 L2336.4,1128.2 L2340.4,1128.2 L2344.5,1128.2 L2348.5,1128.2 L2352.5,1128.2 L2356.6,1128.3 L2360.6,1128.3 L2364.6,1128.3 L2368.6,1128.3 L2372.7,1128.3 L2376.7,1128.3 L2380.7,1128.3 L2384.8,1128.4 L2388.8,1128.4 L2392.8,1128.4 L2396.8,1128.4 L2400.9,1128.4 L2404.9,1128.4 L2408.9,1128.5 L2413.0,1128.5 L2417.0,1128.5 L2421.0,1128.5 L2425.0,1128.5 L2429.1,1128.5 L2433.1,1128.6 L2437.1,1128.6 L2441.1,1128.6 L2445.2,1128.6 L2449.2,1128.6 L2453.2,1128.6 L2457.3,1128.6 L2461.3,1128.6 L2465.3,1128.7 L2469.3,1128.7 L2473.4,1128.7 L2477.4,1128.7 L2477.4,1131.0 L2473.4,1131.0 L2469.3,1131.0 L2465.3,1131.0 L2461.3,1131.0 L2457.3,1131.0 L2453.2,1131.0 L2449.2,1131.0 L2445.2,1131.0 L2441.1,1131.0 L2437.1,1131.0 L2433.1,1131.0 L2429.1,1131.0 L2425.0,1131.0 L2421.0,1131.0 L2417.0,1131.0 L2413.0,1131.0 L2408.9,1131.0 L2404.9,1131.0 L2400.9,1131.0 L2396.8,1131.0 L2392.8,1131.0 L2388.8,1130.9 L2384.8,1130.9 L2380.7,1130.9 L2376.7,1130.9 L2372.7,1130.9 L2368.6,1130.9 L2364.6,1130.9 L2360.6,1130.9 L2356.6,1130.9 L2352.5,1130.9 L2348.5,1130.9 L2344.5,1130.9 L2340.4,1130.9 L2336.4,1130.9 L2332.4,1130.9 L2328.4,1130.9 L2324.3,1130.9 L2320.3,1130.9 L2316.3,1130.9 L2312.3,1130.9 L2308.2,1130.9 L2304.2,1130.9 L2300.2,1130.9 L2296.1,1130.9 L2292.1,1130.9 L2288.1,1130.9 L2284.1,1130.9 L2280.0,1130.9 L2276.0,1130.9 L2272.0,1130.9 L2267.9,1130.9 L2263.9,1130.9 L2259.9,1130.9 L2255.9,1130.9 L2251.8,1130.9 L2247.8,1130.9 L2243.8,1130.8 L2239.7,1130.8 L2235.7,1130.8 L2231.7,1130.8 L2227.7,1130.8 L2223.6,1130.8 L2219.6,1130.8 L2215.6,1130.8 L2211.6,1130.8 L2207.5,1130.8 L2203.5,1130.8 L2199.5,1130.8 L2195.4,1130.8 L2191.4,1130.8 L2187.4,1130.7 L2183.4,1130.7 L2179.3,1130.7 L2175.3,1130.7 L2171.3,1130.7 L2167.2,1130.6 L2163.2,1130.6 L2159.2,1130.6 L2155.2,1130.6 L2151.1,1130.5 L2147.1,1130.5 L2143.1,1130.5 L2139.0,1130.4 L2135.0,1130.4 L2131.0,1130.4 L2127.0,1130.4 L2122.9,1130.3 L2118.9,1130.3 L2114.9,1130.3 L2110.9,1130.2 L2106.8,1130.2 L2102.8,1130.2 L2098.8,1130.2 L2094.7,1130.1 L2090.7,1130.1 L2086.7,1130.1 L2082.7,1130.1 L2078.6,1130.1 L2074.6,1130.0 L2070.6,1130.0 L2066.5,1130.0 L2062.5,1130.0 L2058.5,1130.0 L2054.5,1130.0 L2050.4,1130.0 L2046.4,1130.0 L2042.4,1130.0 L2038.3,1130.0 L2034.3,1130.0 L2030.3,1130.0 L2026.3,1130.1 L2022.2,1130.1 L2018.2,1130.1 L2014.2,1130.1 L2010.2,1130.1 L2006.1,1130.2 L2002.1,1130.2 L1998.1,1130.2 L1994.0,1130.3 L1990.0,1130.3 L1986.0,1130.3 L1982.0,1130.4 L1977.9,1130.4 L1973.9,1130.5 L1969.9,1130.5 L1965.8,1130.5 L1961.8,1130.6 L1957.8,1130.6 L1953.8,1130.7 L1949.7,1130.7 L1945.7,1130.8 L1941.7,1130.8 L1937.6,1130.8 L1933.6,1130.9 L1929.6,1130.9 L1925.6,1131.0 L1921.5,1131.0 L1917.5,1131.0 L1913.5,1131.1 L1909.5,1131.1 L1905.4,1131.2 L1901.4,1131.2 L1897.4,1131.2 L1893.3,1131.2 L1889.3,1131.3 L1885.3,1131.3 L1881.3,1131.3 L1877.2,1131.3 L1873.2,1131.4 L1869.2,1131.4 L1865.1,1131.4 L1861.1,1131.4 L1857.1,1131.4 L1853.1,1131.4 L1849.0,1131.4 L1845.0,1131.4 L1841.0,1131.4 L1836.9,1131.4 L1832.9,1131.4 L1828.9,1131.4 L1824.9,1131.3 L1820.8,1131.3 L1816.8,1131.3 L1812.8,1131.3 L1808.8,1131.3 L1804.7,1131.2 L1800.7,1131.2 L1796.7,1131.2 L1792.6,1131.2 L1788.6,1131.1 L1784.6,1131.1 L1780.6,1131.1 L1776.5,1131.1 L1772.5,1131.0 L1768.5,1131.0 L1764.4,1131.0 L1760.4,1130.9 L1756.4,1130.9 L1752.4,1130.9 L1748.3,1130.8 L1744.3,1130.8 L1740.3,1130.7 L1736.2,1130.7 L1732.2,1130.7 L1728.2,1130.6 L1724.2,1130.6 L1720.1,1130.6 L1716.1,1130.5 L1712.1,1130.5 L1708.1,1130.4 L1704.0,1130.4 L1700.0,1130.4 L1696.0,1130.3 L1691.9,1130.3 L1687.9,1130.3 L1683.9,1130.2 L1679.9,1130.2 L1675.8,1130.2 L1671.8,1130.1 L1667.8,1130.1 L1663.7,1130.1 L1659.7,1130.1 L1655.7,1130.0 L1651.7,1130.0 L1647.6,1130.0 L1643.6,1130.0 L1639.6,1129.9 L1635.5,1129.9 L1631.5,1129.9 L1627.5,1129.9 L1623.5,1129.9 L1619.4,1129.8 L1615.4,1129.8 L1611.4,1129.8 L1607.4,1129.8 L1603.3,1129.8 L1599.3,1129.7 L1595.3,1129.7 L1591.2,1129.7 L1587.2,1129.7 L1583.2,1129.7 L1579.2,1129.7 L1575.1,1129.6 L1571.1,1129.6 L1567.1,1129.6 L1563.0,1129.6 L1559.0,1129.6 L1555.0,1129.6 L1551.0,1129.5 L1546.9,1129.5 L1542.9,1129.5 L1538.9,1129.5 L1534.8,1129.5 L1530.8,1129.5 L1526.8,1129.5 L1522.8,1129.4 L1518.7,1129.4 L1514.7,1129.4 L1510.7,1129.4 L1506.7,1129.4 L1502.6,1129.4 L1498.6,1129.4 L1494.6,1129.4 L1490.5,1129.3 L1486.5,1129.3 L1482.5,1129.3 L1478.5,1129.3 L1474.4,1129.3 L1470.4,1129.3 L1466.4,1129.3 L1462.3,1129.3 L1458.3,1129.3 L1454.3,1129.2 L1450.3,1129.2 L1446.2,1129.2 L1442.2,1129.2 L1438.2,1129.2 L1434.1,1129.2 L1430.1,1129.2 L1426.1,1129.2 L1422.1,1129.2 L1418.0,1129.2 L1414.0,1129.1 L1410.0,1129.1 L1406.0,1129.1 L1401.9,1129.1 L1397.9,1129.1 L1393.9,1129.1 L1389.8,1129.1 L1385.8,1129.1 L1381.8,1129.1 L1377.8,1129.1 L1373.7,1129.0 L1369.7,1129.0 L1365.7,1129.0 L1361.6,1129.0 L1357.6,1129.0 L1353.6,1129.0 L1349.6,1129.0 L1345.5,1129.0 L1341.5,1129.0 L1337.5,1129.0 L1333.4,1128.9 L1329.4,1128.9 L1325.4,1128.9 L1321.4,1128.9 L1317.3,1128.9 L1313.3,1128.9 L1309.3,1128.9 L1305.3,1128.9 L1301.2,1128.8 L1297.2,1128.8 L1293.2,1128.8 L1289.1,1128.8 L1285.1,1128.8 L1281.1,1128.8 L1277.1,1128.8 L1273.0,1128.8 L1269.0,1128.8 Z" fill="#e9a2e3"/><path d="M1269.0,1128.8 L1273.0,1128.8 L1277.1,1128.8 L1281.1,1128.8 L1285.1,1128.8 L1289.1,1128.8 L1293.2,1128.8 L1297.2,1128.8 L1301.2,1128.8 L1305.3,1128.9 L1309.3,1128.9 L1313.3,1128.9 L1317.3,1128.9 L1321.4,1128.9 L1325.4,1128.9 L1329.4,1128.9 L1333.4,1128.9 L1337.5,1129.0 L1341.5,1129.0 L1345.5,1129.0 L1349.6,1129.0 L1353.6,1129.0 L1357.6,1129.0 L1361.6,1129.0 L1365.7,1129.0 L1369.7,1129.0 L1373.7,1129.0 L1377.8,1129.1 L1381.8,1129.1 L1385.8,1129.1 L1389.8,1129.1 L1393.9,1129.1 L1397.9,1129.1 L1401.9,1129.1 L1406.0,1129.1 L1410.0,1129.1 L1414.0,1129.1 L1418.0,1129.2 L1422.1,1129.2 L1426.1,1129.2 L1430.1,1129.2 L1434.1,1129.2 L1438.2,1129.2 L1442.2,1129.2 L1446.2,1129.2 L1450.3,1129.2 L1454.3,1129.2 L1458.3,1129.3 L1462.3,1129.3 L1466.4,1129.3 L1470.4,1129.3 L1474.4,1129.3 L1478.5,1129.3 L1482.5,1129.3 L1486.5,1129.3 L1490.5,1129.3 L1494.6,1129.4 L1498.6,1129.4 L1502.6,1129.4 L1506.7,1129.4 L1510.7,1129.4 L1514.7,1129.4 L1518.7,1129.4 L1522.8,1129.4 L1526.8,1129.5 L1530.8,1129.5 L1534.8,1129.5 L1538.9,1129.5 L1542.9,1129.5 L1546.9,1129.5 L1551.0,1129.5 L1555.0,1129.6 L1559.0,1129.6 L1563.0,1129.6 L1567.1,1129.6 L1571.1,1129.6 L1575.1,1129.6 L1579.2,1129.7 L1583.2,1129.7 L1587.2,1129.7 L1591.2,1129.7 L1595.3,1129.7 L1599.3,1129.7 L1603.3,1129.8 L1607.4,1129.8 L1611.4,1129.8 L1615.4,1129.8 L1619.4,1129.8 L1623.5,1129.9 L1627.5,1129.9 L1631.5,1129.9 L1635.5,1129.9 L1639.6,1129.9 L1643.6,1130.0 L1647.6,1130.0 L1651.7,1130.0 L1655.7,1130.0 L1659.7,1130.1 L1663.7,1130.1 L1667.8,1130.1 L1671.8,1130.1 L1675.8,1130.2 L1679.9,1130.2 L1683.9,1130.2 L1687.9,1130.3 L1691.9,1130.3 L1696.0,1130.3 L1700.0,1130.4 L1704.0,1130.4 L1708.1,1130.4 L1712.1,1130.5 L1716.1,1130.5 L1720.1,1130.6 L1724.2,1130.6 L1728.2,1130.6 L1732.2,1130.7 L1736.2,1130.7 L1740.3,1130.7 L1744.3,1130.8 L1748.3,1130.8 L1752.4,1130.9 L1756.4,1130.9 L1760.4,1130.9 L1764.4,1131.0 L1768.5,1131.0 L1772.5,1131.0 L1776.5,1131.1 L1780.6,1131.1 L1784.6,1131.1 L1788.6,1131.1 L1792.6,1131.2 L1796.7,1131.2 L1800.7,1131.2 L1804.7,1131.2 L1808.8,1131.3 L1812.8,1131.3 L1816.8,1131.3 L1820.8,1131.3 L1824.9,1131.3 L1828.9,1131.4 L1832.9,1131.4 L1836.9,1131.4 L1841.0,1131.4 L1845.0,1131.4 L1849.0,1131.4 L1853.1,1131.4 L1857.1,1131.4 L1861.1,1131.4 L1865.1,1131.4 L1869.2,1131.4 L1873.2,1131.4 L1877.2,1131.3 L1881.3,1131.3 L1885.3,1131.3 L1889.3,1131.3 L1893.3,1131.2 L1897.4,1131.2 L1901.4,1131.2 L1905.4,1131.2 L1909.5,1131.1 L1913.5,1131.1 L1917.5,1131.0 L1921.5,1131.0 L1925.6,1131.0 L1929.6,1130.9 L1933.6,1130.9 L1937.6,1130.8 L1941.7,1130.8 L1945.7,1130.8 L1949.7,1130.7 L1953.8,1130.7 L1957.8,1130.6 L1961.8,1130.6 L1965.8,1130.5 L1969.9,1130.5 L1973.9,1130.5 L1977.9,1130.4 L1982.0,1130.4 L1986.0,1130.3 L1990.0,1130.3 L1994.0,1130.3 L1998.1,1130.2 L2002.1,1130.2 L2006.1,1130.2 L2010.2,1130.1 L2014.2,1130.1 L2018.2,1130.1 L2022.2,1130.1 L2026.3,1130.1 L2030.3,1130.0 L2034.3,1130.0 L2038.3,1130.0 L2042.4,1130.0 L2046.4,1130.0 L2050.4,1130.0 L2054.5,1130.0 L2058.5,1130.0 L2062.5,1130.0 L2066.5,1130.0 L2070.6,1130.0 L2074.6,1130.0 L2078.6,1130.1 L2082.7,1130.1 L2086.7,1130.1 L2090.7,1130.1 L2094.7,1130.1 L2098.8,1130.2 L2102.8,1130.2 L2106.8,1130.2 L2110.9,1130.2 L2114.9,1130.3 L2118.9,1130.3 L2122.9,1130.3 L2127.0,1130.4 L2131.0,1130.4 L2135.0,1130.4 L2139.0,1130.4 L2143.1,1130.5 L2147.1,1130.5 L2151.1,1130.5 L2155.2,1130.6 L2159.2,1130.6 L2163.2,1130.6 L2167.2,1130.6 L2171.3,1130.7 L2175.3,1130.7 L2179.3,1130.7 L2183.4,1130.7 L2187.4,1130.7 L2191.4,1130.8 L2195.4,1130.8 L2199.5,1130.8 L2203.5,1130.8 L2207.5,1130.8 L2211.6,1130.8 L2215.6,1130.8 L2219.6,1130.8 L2223.6,1130.8 L2227.7,1130.8 L2231.7,1130.8 L2235.7,1130.8 L2239.7,1130.8 L2243.8,1130.8 L2247.8,1130.9 L2251.8,1130.9 L2255.9,1130.9 L2259.9,1130.9 L2263.9,1130.9 L2267.9,1130.9 L2272.0,1130.9 L2276.0,1130.9 L2280.0,1130.9 L2284.1,1130.9 L2288.1,1130.9 L2292.1,1130.9 L2296.1,1130.9 L2300.2,1130.9 L2304.2,1130.9 L2308.2,1130.9 L2312.3,1130.9 L2316.3,1130.9 L2320.3,1130.9 L2324.3,1130.9 L2328.4,1130.9 L2332.4,1130.9 L2336.4,1130.9 L2340.4,1130.9 L2344.5,1130.9 L2348.5,1130.9 L2352.5,1130.9 L2356.6,1130.9 L2360.6,1130.9 L2364.6,1130.9 L2368.6,1130.9 L2372.7,1130.9 L2376.7,1130.9 L2380.7,1130.9 L2384.8,1130.9 L2388.8,1130.9 L2392.8,1131.0 L2396.8,1131.0 L2400.9,1131.0 L2404.9,1131.0 L2408.9,1131.0 L2413.0,1131.0 L2417.0,1131.0 L2421.0,1131.0 L2425.0,1131.0 L2429.1,1131.0 L2433.1,1131.0 L2437.1,1131.0 L2441.1,1131.0 L2445.2,1131.0 L2449.2,1131.0 L2453.2,1131.0 L2457.3,1131.0 L2461.3,1131.0 L2465.3,1131.0 L2469.3,1131.0 L2473.4,1131.0 L2477.4,1131.0 L2477.4,1133.6 L2473.4,1133.6 L2469.3,1133.6 L2465.3,1133.7 L2461.3,1133.7 L2457.3,1133.7 L2453.2,1133.7 L2449.2,1133.7 L2445.2,1133.7 L2441.1,1133.7 L2437.1,1133.8 L2433.1,1133.8 L2429.1,1133.8 L2425.0,1133.8 L2421.0,1133.8 L2417.0,1133.9 L2413.0,1133.9 L2408.9,1133.9 L2404.9,1134.0 L2400.9,1134.0 L2396.8,1134.0 L2392.8,1134.1 L2388.8,1134.2 L2384.8,1134.3 L2380.7,1134.4 L2376.7,1134.6 L2372.7,1134.7 L2368.6,1134.9 L2364.6,1135.0 L2360.6,1135.2 L2356.6,1135.4 L2352.5,1135.5 L2348.5,1135.7 L2344.5,1135.9 L2340.4,1136.0 L2336.4,1136.2 L2332.4,1136.3 L2328.4,1136.5 L2324.3,1136.6 L2320.3,1136.7 L2316.3,1136.8 L2312.3,1136.9 L2308.2,1136.9 L2304.2,1137.0 L2300.2,1137.0 L2296.1,1137.0 L2292.1,1137.0 L2288.1,1136.9 L2284.1,1136.9 L2280.0,1136.8 L2276.0,1136.8 L2272.0,1136.7 L2267.9,1136.6 L2263.9,1136.6 L2259.9,1136.5 L2255.9,1136.4 L2251.8,1136.3 L2247.8,1136.2 L2243.8,1136.1 L2239.7,1136.0 L2235.7,1135.9 L2231.7,1135.8 L2227.7,1135.7 L2223.6,1135.7 L2219.6,1135.6 L2215.6,1135.5 L2211.6,1135.4 L2207.5,1135.4 L2203.5,1135.3 L2199.5,1135.3 L2195.4,1135.3 L2191.4,1135.2 L2187.4,1135.2 L2183.4,1135.1 L2179.3,1135.1 L2175.3,1135.1 L2171.3,1135.0 L2167.2,1135.0 L2163.2,1135.0 L2159.2,1134.9 L2155.2,1134.9 L2151.1,1134.9 L2147.1,1134.8 L2143.1,1134.8 L2139.0,1134.8 L2135.0,1134.8 L2131.0,1134.7 L2127.0,1134.7 L2122.9,1134.7 L2118.9,1134.7 L2114.9,1134.7 L2110.9,1134.7 L2106.8,1134.6 L2102.8,1134.6 L2098.8,1134.6 L2094.7,1134.6 L2090.7,1134.6 L2086.7,1134.6 L2082.7,1134.5 L2078.6,1134.5 L2074.6,1134.5 L2070.6,1134.5 L2066.5,1134.5 L2062.5,1134.5 L2058.5,1134.4 L2054.5,1134.4 L2050.4,1134.4 L2046.4,1134.4 L2042.4,1134.4 L2038.3,1134.3 L2034.3,1134.3 L2030.3,1134.3 L2026.3,1134.3 L2022.2,1134.3 L2018.2,1134.3 L2014.2,1134.3 L2010.2,1134.2 L2006.1,1134.2 L2002.1,1134.2 L1998.1,1134.2 L1994.0,1134.2 L1990.0,1134.2 L1986.0,1134.2 L1982.0,1134.1 L1977.9,1134.1 L1973.9,1134.1 L1969.9,1134.1 L1965.8,1134.1 L1961.8,1134.1 L1957.8,1134.1 L1953.8,1134.1 L1949.7,1134.1 L1945.7,1134.0 L1941.7,1134.0 L1937.6,1134.0 L1933.6,1134.0 L1929.6,1134.0 L1925.6,1134.0 L1921.5,1134.0 L1917.5,1134.0 L1913.5,1134.0 L1909.5,1134.0 L1905.4,1134.0 L1901.4,1134.0 L1897.4,1134.0 L1893.3,1134.2 L1889.3,1134.6 L1885.3,1135.0 L1881.3,1135.5 L1877.2,1136.1 L1873.2,1136.7 L1869.2,1137.2 L1865.1,1137.7 L1861.1,1138.1 L1857.1,1138.3 L1853.1,1138.4 L1849.0,1138.3 L1845.0,1138.1 L1841.0,1137.9 L1836.9,1137.5 L1832.9,1137.0 L1828.9,1136.6 L1824.9,1136.1 L1820.8,1135.6 L1816.8,1135.2 L1812.8,1134.7 L1808.8,1134.4 L1804.7,1134.2 L1800.7,1134.0 L1796.7,1134.0 L1792.6,1133.9 L1788.6,1133.9 L1784.6,1133.8 L1780.6,1133.8 L1776.5,1133.7 L1772.5,1133.7 L1768.5,1133.6 L1764.4,1133.6 L1760.4,1133.5 L1756.4,1133.5 L1752.4,1133.5 L1748.3,1133.4 L1744.3,1133.4 L1740.3,1133.4 L1736.2,1133.3 L1732.2,1133.3 L1728.2,1133.3 L1724.2,1133.2 L1720.1,1133.2 L1716.1,1133.2 L1712.1,1133.2 L1708.1,1133.1 L1704.0,1133.1 L1700.0,1133.1 L1696.0,1133.1 L1691.9,1133.1 L1687.9,1133.1 L1683.9,1133.1 L1679.9,1133.0 L1675.8,1133.0 L1671.8,1133.0 L1667.8,1133.0 L1663.7,1133.0 L1659.7,1133.0 L1655.7,1133.0 L1651.7,1133.0 L1647.6,1133.0 L1643.6,1133.1 L1639.6,1133.3 L1635.5,1133.5 L1631.5,1133.8 L1627.5,1134.0 L1623.5,1134.2 L1619.4,1134.4 L1615.4,1134.5 L1611.4,1134.6 L1607.4,1134.7 L1603.3,1134.8 L1599.3,1134.9 L1595.3,1135.0 L1591.2,1135.1 L1587.2,1135.1 L1583.2,1135.2 L1579.2,1135.2 L1575.1,1135.2 L1571.1,1135.3 L1567.1,1135.3 L1563.0,1135.3 L1559.0,1135.3 L1555.0,1135.3 L1551.0,1135.3 L1546.9,1135.2 L1542.9,1135.2 L1538.9,1135.2 L1534.8,1135.1 L1530.8,1135.1 L1526.8,1135.0 L1522.8,1134.9 L1518.7,1134.8 L1514.7,1134.8 L1510.7,1134.7 L1506.7,1134.6 L1502.6,1134.5 L1498.6,1134.5 L1494.6,1134.4 L1490.5,1134.3 L1486.5,1134.2 L1482.5,1134.1 L1478.5,1133.9 L1474.4,1133.8 L1470.4,1133.7 L1466.4,1133.5 L1462.3,1133.4 L1458.3,1133.2 L1454.3,1133.1 L1450.3,1133.0 L1446.2,1132.9 L1442.2,1132.8 L1438.2,1132.7 L1434.1,1132.6 L1430.1,1132.6 L1426.1,1132.5 L1422.1,1132.5 L1418.0,1132.5 L1414.0,1132.5 L1410.0,1132.6 L1406.0,1132.6 L1401.9,1132.7 L1397.9,1132.8 L1393.9,1132.8 L1389.8,1132.9 L1385.8,1133.0 L1381.8,1133.1 L1377.8,1133.2 L1373.7,1133.3 L1369.7,1133.4 L1365.7,1133.5 L1361.6,1133.5 L1357.6,1133.6 L1353.6,1133.6 L1349.6,1133.7 L1345.5,1133.7 L1341.5,1133.7 L1337.5,1133.7 L1333.4,1133.7 L1329.4,1133.6 L1325.4,1133.6 L1321.4,1133.5 L1317.3,1133.5 L1313.3,1133.4 L1309.3,1133.3 L1305.3,1133.2 L1301.2,1133.2 L1297.2,1133.1 L1293.2,1133.0 L1289.1,1132.9 L1285.1,1132.8 L1281.1,1132.7 L1277.1,1132.6 L1273.0,1132.6 L1269.0,1132.5 Z" fill="#f8d8df"/><path d="M1269.0,1132.5 L1273.0,1132.6 L1277.1,1132.6 L1281.1,1132.7 L1285.1,1132.8 L1289.1,1132.9 L1293.2,1133.0 L1297.2,1133.1 L1301.2,1133.2 L1305.3,1133.2 L1309.3,1133.3 L1313.3,1133.4 L1317.3,1133.5 L1321.4,1133.5 L1325.4,1133.6 L1329.4,1133.6 L1333.4,1133.7 L1337.5,1133.7 L1341.5,1133.7 L1345.5,1133.7 L1349.6,1133.7 L1353.6,1133.6 L1357.6,1133.6 L1361.6,1133.5 L1365.7,1133.5 L1369.7,1133.4 L1373.7,1133.3 L1377.8,1133.2 L1381.8,1133.1 L1385.8,1133.0 L1389.8,1132.9 L1393.9,1132.8 L1397.9,1132.8 L1401.9,1132.7 L1406.0,1132.6 L1410.0,1132.6 L1414.0,1132.5 L1418.0,1132.5 L1422.1,1132.5 L1426.1,1132.5 L1430.1,1132.6 L1434.1,1132.6 L1438.2,1132.7 L1442.2,1132.8 L1446.2,1132.9 L1450.3,1133.0 L1454.3,1133.1 L1458.3,1133.2 L1462.3,1133.4 L1466.4,1133.5 L1470.4,1133.7 L1474.4,1133.8 L1478.5,1133.9 L1482.5,1134.1 L1486.5,1134.2 L1490.5,1134.3 L1494.6,1134.4 L1498.6,1134.5 L1502.6,1134.5 L1506.7,1134.6 L1510.7,1134.7 L1514.7,1134.8 L1518.7,1134.8 L1522.8,1134.9 L1526.8,1135.0 L1530.8,1135.1 L1534.8,1135.1 L1538.9,1135.2 L1542.9,1135.2 L1546.9,1135.2 L1551.0,1135.3 L1555.0,1135.3 L1559.0,1135.3 L1563.0,1135.3 L1567.1,1135.3 L1571.1,1135.3 L1575.1,1135.2 L1579.2,1135.2 L1583.2,1135.2 L1587.2,1135.1 L1591.2,1135.1 L1595.3,1135.0 L1599.3,1134.9 L1603.3,1134.8 L1607.4,1134.7 L1611.4,1134.6 L1615.4,1134.5 L1619.4,1134.4 L1623.5,1134.2 L1627.5,1134.0 L1631.5,1133.8 L1635.5,1133.5 L1639.6,1133.3 L1643.6,1133.1 L1647.6,1133.0 L1651.7,1133.0 L1655.7,1133.0 L1659.7,1133.0 L1663.7,1133.0 L1667.8,1133.0 L1671.8,1133.0 L1675.8,1133.0 L1679.9,1133.0 L1683.9,1133.1 L1687.9,1133.1 L1691.9,1133.1 L1696.0,1133.1 L1700.0,1133.1 L1704.0,1133.1 L1708.1,1133.1 L1712.1,1133.2 L1716.1,1133.2 L1720.1,1133.2 L1724.2,1133.2 L1728.2,1133.3 L1732.2,1133.3 L1736.2,1133.3 L1740.3,1133.4 L1744.3,1133.4 L1748.3,1133.4 L1752.4,1133.5 L1756.4,1133.5 L1760.4,1133.5 L1764.4,1133.6 L1768.5,1133.6 L1772.5,1133.7 L1776.5,1133.7 L1780.6,1133.8 L1784.6,1133.8 L1788.6,1133.9 L1792.6,1133.9 L1796.7,1134.0 L1800.7,1134.0 L1804.7,1134.2 L1808.8,1134.4 L1812.8,1134.7 L1816.8,1135.2 L1820.8,1135.6 L1824.9,1136.1 L1828.9,1136.6 L1832.9,1137.0 L1836.9,1137.5 L1841.0,1137.9 L1845.0,1138.1 L1849.0,1138.3 L1853.1,1138.4 L1857.1,1138.3 L1861.1,1138.1 L1865.1,1137.7 L1869.2,1137.2 L1873.2,1136.7 L1877.2,1136.1 L1881.3,1135.5 L1885.3,1135.0 L1889.3,1134.6 L1893.3,1134.2 L1897.4,1134.0 L1901.4,1134.0 L1905.4,1134.0 L1909.5,1134.0 L1913.5,1134.0 L1917.5,1134.0 L1921.5,1134.0 L1925.6,1134.0 L1929.6,1134.0 L1933.6,1134.0 L1937.6,1134.0 L1941.7,1134.0 L1945.7,1134.0 L1949.7,1134.1 L1953.8,1134.1 L1957.8,1134.1 L1961.8,1134.1 L1965.8,1134.1 L1969.9,1134.1 L1973.9,1134.1 L1977.9,1134.1 L1982.0,1134.1 L1986.0,1134.2 L1990.0,1134.2 L1994.0,1134.2 L1998.1,1134.2 L2002.1,1134.2 L2006.1,1134.2 L2010.2,1134.2 L2014.2,1134.3 L2018.2,1134.3 L2022.2,1134.3 L2026.3,1134.3 L2030.3,1134.3 L2034.3,1134.3 L2038.3,1134.3 L2042.4,1134.4 L2046.4,1134.4 L2050.4,1134.4 L2054.5,1134.4 L2058.5,1134.4 L2062.5,1134.5 L2066.5,1134.5 L2070.6,1134.5 L2074.6,1134.5 L2078.6,1134.5 L2082.7,1134.5 L2086.7,1134.6 L2090.7,1134.6 L2094.7,1134.6 L2098.8,1134.6 L2102.8,1134.6 L2106.8,1134.6 L2110.9,1134.7 L2114.9,1134.7 L2118.9,1134.7 L2122.9,1134.7 L2127.0,1134.7 L2131.0,1134.7 L2135.0,1134.8 L2139.0,1134.8 L2143.1,1134.8 L2147.1,1134.8 L2151.1,1134.9 L2155.2,1134.9 L2159.2,1134.9 L2163.2,1135.0 L2167.2,1135.0 L2171.3,1135.0 L2175.3,1135.1 L2179.3,1135.1 L2183.4,1135.1 L2187.4,1135.2 L2191.4,1135.2 L2195.4,1135.3 L2199.5,1135.3 L2203.5,1135.3 L2207.5,1135.4 L2211.6,1135.4 L2215.6,1135.5 L2219.6,1135.6 L2223.6,1135.7 L2227.7,1135.7 L2231.7,1135.8 L2235.7,1135.9 L2239.7,1136.0 L2243.8,1136.1 L2247.8,1136.2 L2251.8,1136.3 L2255.9,1136.4 L2259.9,1136.5 L2263.9,1136.6 L2267.9,1136.6 L2272.0,1136.7 L2276.0,1136.8 L2280.0,1136.8 L2284.1,1136.9 L2288.1,1136.9 L2292.1,1137.0 L2296.1,1137.0 L2300.2,1137.0 L2304.2,1137.0 L2308.2,1136.9 L2312.3,1136.9 L2316.3,1136.8 L2320.3,1136.7 L2324.3,1136.6 L2328.4,1136.5 L2332.4,1136.3 L2336.4,1136.2 L2340.4,1136.0 L2344.5,1135.9 L2348.5,1135.7 L2352.5,1135.5 L2356.6,1135.4 L2360.6,1135.2 L2364.6,1135.0 L2368.6,1134.9 L2372.7,1134.7 L2376.7,1134.6 L2380.7,1134.4 L2384.8,1134.3 L2388.8,1134.2 L2392.8,1134.1 L2396.8,1134.0 L2400.9,1134.0 L2404.9,1134.0 L2408.9,1133.9 L2413.0,1133.9 L2417.0,1133.9 L2421.0,1133.8 L2425.0,1133.8 L2429.1,1133.8 L2433.1,1133.8 L2437.1,1133.8 L2441.1,1133.7 L2445.2,1133.7 L2449.2,1133.7 L2453.2,1133.7 L2457.3,1133.7 L2461.3,1133.7 L2465.3,1133.7 L2469.3,1133.6 L2473.4,1133.6 L2477.4,1133.6 L2477.4,1150.6 L2473.4,1150.6 L2469.3,1150.5 L2465.3,1150.5 L2461.3,1150.5 L2457.3,1150.4 L2453.2,1150.4 L2449.2,1150.4 L2445.2,1150.4 L2441.1,1150.3 L2437.1,1150.3 L2433.1,1150.3 L2429.1,1150.2 L2425.0,1150.2 L2421.0,1150.2 L2417.0,1150.1 L2413.0,1150.1 L2408.9,1150.1 L2404.9,1150.0 L2400.9,1150.0 L2396.8,1150.0 L2392.8,1149.9 L2388.8,1149.9 L2384.8,1149.8 L2380.7,1149.8 L2376.7,1149.7 L2372.7,1149.7 L2368.6,1149.6 L2364.6,1149.6 L2360.6,1149.5 L2356.6,1149.5 L2352.5,1149.4 L2348.5,1149.4 L2344.5,1149.3 L2340.4,1149.3 L2336.4,1149.2 L2332.4,1149.2 L2328.4,1149.1 L2324.3,1149.1 L2320.3,1149.1 L2316.3,1149.1 L2312.3,1149.0 L2308.2,1149.0 L2304.2,1149.0 L2300.2,1149.0 L2296.1,1149.0 L2292.1,1149.1 L2288.1,1149.1 L2284.1,1149.2 L2280.0,1149.3 L2276.0,1149.4 L2272.0,1149.6 L2267.9,1149.7 L2263.9,1149.9 L2259.9,1150.0 L2255.9,1150.2 L2251.8,1150.3 L2247.8,1150.5 L2243.8,1150.7 L2239.7,1150.8 L2235.7,1151.0 L2231.7,1151.1 L2227.7,1151.2 L2223.6,1151.3 L2219.6,1151.4 L2215.6,1151.5 L2211.6,1151.5 L2207.5,1151.5 L2203.5,1151.5 L2199.5,1151.5 L2195.4,1151.5 L2191.4,1151.4 L2187.4,1151.4 L2183.4,1151.4 L2179.3,1151.3 L2175.3,1151.3 L2171.3,1151.2 L2167.2,1151.1 L2163.2,1151.1 L2159.2,1151.0 L2155.2,1150.9 L2151.1,1150.9 L2147.1,1150.8 L2143.1,1150.7 L2139.0,1150.6 L2135.0,1150.5 L2131.0,1150.4 L2127.0,1150.3 L2122.9,1150.2 L2118.9,1150.1 L2114.9,1150.1 L2110.9,1150.0 L2106.8,1149.9 L2102.8,1149.8 L2098.8,1149.7 L2094.7,1149.6 L2090.7,1149.5 L2086.7,1149.4 L2082.7,1149.3 L2078.6,1149.3 L2074.6,1149.2 L2070.6,1149.1 L2066.5,1149.0 L2062.5,1149.0 L2058.5,1148.9 L2054.5,1148.9 L2050.4,1148.8 L2046.4,1148.8 L2042.4,1148.7 L2038.3,1148.7 L2034.3,1148.6 L2030.3,1148.6 L2026.3,1148.6 L2022.2,1148.6 L2018.2,1148.5 L2014.2,1148.5 L2010.2,1148.5 L2006.1,1148.5 L2002.1,1148.4 L1998.1,1148.4 L1994.0,1148.4 L1990.0,1148.4 L1986.0,1148.4 L1982.0,1148.3 L1977.9,1148.3 L1973.9,1148.3 L1969.9,1148.2 L1965.8,1148.2 L1961.8,1148.1 L1957.8,1148.1 L1953.8,1148.1 L1949.7,1148.0 L1945.7,1147.9 L1941.7,1147.9 L1937.6,1147.8 L1933.6,1147.7 L1929.6,1147.6 L1925.6,1147.5 L1921.5,1147.4 L1917.5,1147.3 L1913.5,1147.2 L1909.5,1147.0 L1905.4,1146.9 L1901.4,1146.8 L1897.4,1146.7 L1893.3,1146.6 L1889.3,1146.5 L1885.3,1146.4 L1881.3,1146.3 L1877.2,1146.2 L1873.2,1146.2 L1869.2,1146.1 L1865.1,1146.1 L1861.1,1146.0 L1857.1,1146.0 L1853.1,1146.0 L1849.0,1146.0 L1845.0,1146.0 L1841.0,1146.0 L1836.9,1146.0 L1832.9,1146.1 L1828.9,1146.1 L1824.9,1146.1 L1820.8,1146.1 L1816.8,1146.2 L1812.8,1146.2 L1808.8,1146.2 L1804.7,1146.3 L1800.7,1146.3 L1796.7,1146.4 L1792.6,1146.4 L1788.6,1146.5 L1784.6,1146.5 L1780.6,1146.6 L1776.5,1146.6 L1772.5,1146.7 L1768.5,1146.7 L1764.4,1146.8 L1760.4,1146.9 L1756.4,1146.9 L1752.4,1147.0 L1748.3,1147.0 L1744.3,1147.1 L1740.3,1147.2 L1736.2,1147.2 L1732.2,1147.3 L1728.2,1147.4 L1724.2,1147.5 L1720.1,1147.6 L1716.1,1147.6 L1712.1,1147.7 L1708.1,1147.8 L1704.0,1147.9 L1700.0,1148.0 L1696.0,1148.1 L1691.9,1148.2 L1687.9,1148.3 L1683.9,1148.3 L1679.9,1148.4 L1675.8,1148.5 L1671.8,1148.6 L1667.8,1148.6 L1663.7,1148.7 L1659.7,1148.7 L1655.7,1148.8 L1651.7,1148.8 L1647.6,1148.8 L1643.6,1148.8 L1639.6,1148.9 L1635.5,1148.9 L1631.5,1148.9 L1627.5,1148.9 L1623.5,1148.9 L1619.4,1148.9 L1615.4,1148.9 L1611.4,1149.0 L1607.4,1149.0 L1603.3,1149.0 L1599.3,1149.0 L1595.3,1149.0 L1591.2,1149.0 L1587.2,1149.0 L1583.2,1149.0 L1579.2,1149.0 L1575.1,1149.0 L1571.1,1149.0 L1567.1,1149.0 L1563.0,1148.9 L1559.0,1148.9 L1555.0,1148.9 L1551.0,1148.8 L1546.9,1148.8 L1542.9,1148.7 L1538.9,1148.7 L1534.8,1148.6 L1530.8,1148.6 L1526.8,1148.5 L1522.8,1148.4 L1518.7,1148.4 L1514.7,1148.3 L1510.7,1148.2 L1506.7,1148.2 L1502.6,1148.1 L1498.6,1148.1 L1494.6,1148.0 L1490.5,1148.0 L1486.5,1147.9 L1482.5,1147.8 L1478.5,1147.8 L1474.4,1147.7 L1470.4,1147.6 L1466.4,1147.5 L1462.3,1147.5 L1458.3,1147.4 L1454.3,1147.3 L1450.3,1147.3 L1446.2,1147.2 L1442.2,1147.1 L1438.2,1147.1 L1434.1,1147.1 L1430.1,1147.0 L1426.1,1147.0 L1422.1,1147.0 L1418.0,1147.0 L1414.0,1147.0 L1410.0,1147.0 L1406.0,1147.0 L1401.9,1147.1 L1397.9,1147.1 L1393.9,1147.1 L1389.8,1147.2 L1385.8,1147.2 L1381.8,1147.3 L1377.8,1147.3 L1373.7,1147.3 L1369.7,1147.4 L1365.7,1147.4 L1361.6,1147.4 L1357.6,1147.5 L1353.6,1147.5 L1349.6,1147.5 L1345.5,1147.5 L1341.5,1147.5 L1337.5,1147.5 L1333.4,1147.5 L1329.4,1147.5 L1325.4,1147.5 L1321.4,1147.4 L1317.3,1147.4 L1313.3,1147.4 L1309.3,1147.3 L1305.3,1147.3 L1301.2,1147.3 L1297.2,1147.2 L1293.2,1147.2 L1289.1,1147.2 L1285.1,1147.1 L1281.1,1147.1 L1277.1,1147.1 L1273.0,1147.0 L1269.0,1147.0 Z" fill="#c2c6f5"/><path d="M1269.0,1147.0 L1273.0,1147.0 L1277.1,1147.1 L1281.1,1147.1 L1285.1,1147.1 L1289.1,1147.2 L1293.2,1147.2 L1297.2,1147.2 L1301.2,1147.3 L1305.3,1147.3 L1309.3,1147.3 L1313.3,1147.4 L1317.3,1147.4 L1321.4,1147.4 L1325.4,1147.5 L1329.4,1147.5 L1333.4,1147.5 L1337.5,1147.5 L1341.5,1147.5 L1345.5,1147.5 L1349.6,1147.5 L1353.6,1147.5 L1357.6,1147.5 L1361.6,1147.4 L1365.7,1147.4 L1369.7,1147.4 L1373.7,1147.3 L1377.8,1147.3 L1381.8,1147.3 L1385.8,1147.2 L1389.8,1147.2 L1393.9,1147.1 L1397.9,1147.1 L1401.9,1147.1 L1406.0,1147.0 L1410.0,1147.0 L1414.0,1147.0 L1418.0,1147.0 L1422.1,1147.0 L1426.1,1147.0 L1430.1,1147.0 L1434.1,1147.1 L1438.2,1147.1 L1442.2,1147.1 L1446.2,1147.2 L1450.3,1147.3 L1454.3,1147.3 L1458.3,1147.4 L1462.3,1147.5 L1466.4,1147.5 L1470.4,1147.6 L1474.4,1147.7 L1478.5,1147.8 L1482.5,1147.8 L1486.5,1147.9 L1490.5,1148.0 L1494.6,1148.0 L1498.6,1148.1 L1502.6,1148.1 L1506.7,1148.2 L1510.7,1148.2 L1514.7,1148.3 L1518.7,1148.4 L1522.8,1148.4 L1526.8,1148.5 L1530.8,1148.6 L1534.8,1148.6 L1538.9,1148.7 L1542.9,1148.7 L1546.9,1148.8 L1551.0,1148.8 L1555.0,1148.9 L1559.0,1148.9 L1563.0,1148.9 L1567.1,1149.0 L1571.1,1149.0 L1575.1,1149.0 L1579.2,1149.0 L1583.2,1149.0 L1587.2,1149.0 L1591.2,1149.0 L1595.3,1149.0 L1599.3,1149.0 L1603.3,1149.0 L1607.4,1149.0 L1611.4,1149.0 L1615.4,1148.9 L1619.4,1148.9 L1623.5,1148.9 L1627.5,1148.9 L1631.5,1148.9 L1635.5,1148.9 L1639.6,1148.9 L1643.6,1148.8 L1647.6,1148.8 L1651.7,1148.8 L1655.7,1148.8 L1659.7,1148.7 L1663.7,1148.7 L1667.8,1148.6 L1671.8,1148.6 L1675.8,1148.5 L1679.9,1148.4 L1683.9,1148.3 L1687.9,1148.3 L1691.9,1148.2 L1696.0,1148.1 L1700.0,1148.0 L1704.0,1147.9 L1708.1,1147.8 L1712.1,1147.7 L1716.1,1147.6 L1720.1,1147.6 L1724.2,1147.5 L1728.2,1147.4 L1732.2,1147.3 L1736.2,1147.2 L1740.3,1147.2 L1744.3,1147.1 L1748.3,1147.0 L1752.4,1147.0 L1756.4,1146.9 L1760.4,1146.9 L1764.4,1146.8 L1768.5,1146.7 L1772.5,1146.7 L1776.5,1146.6 L1780.6,1146.6 L1784.6,1146.5 L1788.6,1146.5 L1792.6,1146.4 L1796.7,1146.4 L1800.7,1146.3 L1804.7,1146.3 L1808.8,1146.2 L1812.8,1146.2 L1816.8,1146.2 L1820.8,1146.1 L1824.9,1146.1 L1828.9,1146.1 L1832.9,1146.1 L1836.9,1146.0 L1841.0,1146.0 L1845.0,1146.0 L1849.0,1146.0 L1853.1,1146.0 L1857.1,1146.0 L1861.1,1146.0 L1865.1,1146.1 L1869.2,1146.1 L1873.2,1146.2 L1877.2,1146.2 L1881.3,1146.3 L1885.3,1146.4 L1889.3,1146.5 L1893.3,1146.6 L1897.4,1146.7 L1901.4,1146.8 L1905.4,1146.9 L1909.5,1147.0 L1913.5,1147.2 L1917.5,1147.3 L1921.5,1147.4 L1925.6,1147.5 L1929.6,1147.6 L1933.6,1147.7 L1937.6,1147.8 L1941.7,1147.9 L1945.7,1147.9 L1949.7,1148.0 L1953.8,1148.1 L1957.8,1148.1 L1961.8,1148.1 L1965.8,1148.2 L1969.9,1148.2 L1973.9,1148.3 L1977.9,1148.3 L1982.0,1148.3 L1986.0,1148.4 L1990.0,1148.4 L1994.0,1148.4 L1998.1,1148.4 L2002.1,1148.4 L2006.1,1148.5 L2010.2,1148.5 L2014.2,1148.5 L2018.2,1148.5 L2022.2,1148.6 L2026.3,1148.6 L2030.3,1148.6 L2034.3,1148.6 L2038.3,1148.7 L2042.4,1148.7 L2046.4,1148.8 L2050.4,1148.8 L2054.5,1148.9 L2058.5,1148.9 L2062.5,1149.0 L2066.5,1149.0 L2070.6,1149.1 L2074.6,1149.2 L2078.6,1149.3 L2082.7,1149.3 L2086.7,1149.4 L2090.7,1149.5 L2094.7,1149.6 L2098.8,1149.7 L2102.8,1149.8 L2106.8,1149.9 L2110.9,1150.0 L2114.9,1150.1 L2118.9,1150.1 L2122.9,1150.2 L2127.0,1150.3 L2131.0,1150.4 L2135.0,1150.5 L2139.0,1150.6 L2143.1,1150.7 L2147.1,1150.8 L2151.1,1150.9 L2155.2,1150.9 L2159.2,1151.0 L2163.2,1151.1 L2167.2,1151.1 L2171.3,1151.2 L2175.3,1151.3 L2179.3,1151.3 L2183.4,1151.4 L2187.4,1151.4 L2191.4,1151.4 L2195.4,1151.5 L2199.5,1151.5 L2203.5,1151.5 L2207.5,1151.5 L2211.6,1151.5 L2215.6,1151.5 L2219.6,1151.4 L2223.6,1151.3 L2227.7,1151.2 L2231.7,1151.1 L2235.7,1151.0 L2239.7,1150.8 L2243.8,1150.7 L2247.8,1150.5 L2251.8,1150.3 L2255.9,1150.2 L2259.9,1150.0 L2263.9,1149.9 L2267.9,1149.7 L2272.0,1149.6 L2276.0,1149.4 L2280.0,1149.3 L2284.1,1149.2 L2288.1,1149.1 L2292.1,1149.1 L2296.1,1149.0 L2300.2,1149.0 L2304.2,1149.0 L2308.2,1149.0 L2312.3,1149.0 L2316.3,1149.1 L2320.3,1149.1 L2324.3,1149.1 L2328.4,1149.1 L2332.4,1149.2 L2336.4,1149.2 L2340.4,1149.3 L2344.5,1149.3 L2348.5,1149.4 L2352.5,1149.4 L2356.6,1149.5 L2360.6,1149.5 L2364.6,1149.6 L2368.6,1149.6 L2372.7,1149.7 L2376.7,1149.7 L2380.7,1149.8 L2384.8,1149.8 L2388.8,1149.9 L2392.8,1149.9 L2396.8,1150.0 L2400.9,1150.0 L2404.9,1150.0 L2408.9,1150.1 L2413.0,1150.1 L2417.0,1150.1 L2421.0,1150.2 L2425.0,1150.2 L2429.1,1150.2 L2433.1,1150.3 L2437.1,1150.3 L2441.1,1150.3 L2445.2,1150.4 L2449.2,1150.4 L2453.2,1150.4 L2457.3,1150.4 L2461.3,1150.5 L2465.3,1150.5 L2469.3,1150.5 L2473.4,1150.6 L2477.4,1150.6 L2477.4,1270 L1269,1270 Z" fill="#a7a2f4"/></svg>
<div class="a" style="left:2429.3px;top:1194.3px;width:99.59999999999991px;height:99.60000000000014px;border-radius:50%;box-shadow:0 8px 24px rgba(20,40,80,0.08);"></div>
<svg class="a" style="left:0px;top:0px;" width="2560" height="1364" viewBox="0 0 2560 1364"><circle cx="2479.1" cy="1244.1" r="49.8" fill="#0b69fa"/><rect x="2455.7" y="1229.6" width="46.8" height="23.8" rx="11.9" fill="#fff"/><path d="M2483.4,1258.2 L2493.4,1258.2 L2493.4,1267.2 Z" fill="#fff"/></svg>
<div class="a" style="left:0px;top:58px;width:121px;height:1306px;background:#26303c;"></div>
<div class="a" style="left:121px;top:58px;width:1px;height:1306px;background:#3a4350;"></div>
<div class="a" style="left:7px;top:71px;width:101px;height:78px;background:#4f5f6e;border-radius:8px;"></div>
<svg class="a" style="left:0px;top:0px;" width="130" height="160" viewBox="0 0 130 160"><path d="M107,99 L117,108.6 L107,118 Z" fill="#4f5f6e"/></svg>
<svg class="a" style="left:0px;top:0px;" width="121" height="1364" viewBox="0 0 121 1364"><path d="M46.5,97.5 L57.5,87.5 L68.5,97.5 L68.5,110.5 Q68.5,112.5 66.5,112.5 L48.5,112.5 Q46.5,112.5 46.5,110.5 Z" fill="none" stroke="#d9dce0" stroke-width="2.2" stroke-linecap="round" stroke-linejoin="round"/><path d="M52.5,112.5 L52.5,103.5 Q52.5,100.5 55.5,100.5 L59.5,100.5 Q62.5,100.5 62.5,103.5 L62.5,112.5" fill="none" stroke="#d9dce0" stroke-width="2.2" stroke-linecap="round" stroke-linejoin="round"/><rect x="45.5" y="169" width="24" height="17" rx="1.5" fill="none" stroke="#d9dce0" stroke-width="2.2" stroke-linecap="round" stroke-linejoin="round"/><line x1="43.5" y1="191" x2="71.5" y2="191" fill="none" stroke="#d9dce0" stroke-width="2.2" stroke-linecap="round" stroke-linejoin="round"/><circle cx="56.5" cy="176.5" r="4" fill="none" stroke="#d9dce0" stroke-width="2.2" stroke-linecap="round" stroke-linejoin="round"/><line x1="59.5" y1="179.5" x2="62.0" y2="182" fill="none" stroke="#d9dce0" stroke-width="2.2" stroke-linecap="round" stroke-linejoin="round"/><g transform="translate(44.5,248) scale(1.083)"><path d="M10 13a5 5 0 0 0 7.54.54l3-3a5 5 0 0 0-7.07-7.07l-1.72 1.71" fill="none" stroke="#d9dce0" stroke-width="2.2" stroke-linecap="round" stroke-linejoin="round" stroke-width="2.05"/><path d="M14 11a5 5 0 0 0-7.54-.54l-3 3a5 5 0 0 0 7.07 7.07l1.71-1.71" fill="none" stroke="#d9dce0" stroke-width="2.2" stroke-linecap="round" stroke-linejoin="round" stroke-width="2.05"/></g><circle cx="57.5" cy="342" r="12" fill="none" stroke="#d9dce0" stroke-width="2.2" stroke-linecap="round" stroke-linejoin="round"/><path d="M52.0,342 L56.0,346 L63.5,338" fill="none" stroke="#d9dce0" stroke-width="2.2" stroke-linecap="round" stroke-linejoin="round"/><circle cx="78.0" cy="331.2" r="4.6" fill="#52b98a"/><path d="M53.5,415 Q54.5,422 61.5,423 Q54.5,424 53.5,431 Q52.5,424 45.5,423 Q52.5,422 53.5,415 Z" fill="none" stroke="#d9dce0" stroke-width="2.2" stroke-linecap="round" stroke-linejoin="round" stroke-width="2"/><path d="M66.5,409 Q67.0,413.5 71.5,414 Q67.0,414.5 66.5,419 Q66.0,414.5 61.5,414 Q66.0,413.5 66.5,409 Z" fill="#d9dce0"/><path d="M66.5,427 Q67.0,431.5 71.5,432 Q67.0,432.5 66.5,437 Q66.0,432.5 61.5,432 Q66.0,431.5 66.5,427 Z" fill="#d9dce0"/><path d="M58.5,533 L48.5,533 Q45.5,533 45.5,536 L45.5,554 Q45.5,557 48.5,557 L66.5,557 Q69.5,557 69.5,554 L69.5,545" fill="none" stroke="#d9dce0" stroke-width="2.2" stroke-linecap="round" stroke-linejoin="round"/><path d="M52.5,550 L53.5,545 L64.5,534 Q66.5,532 68.5,534 Q70.5,536 68.5,538 L57.5,549 Z" fill="none" stroke="#d9dce0" stroke-width="2.2" stroke-linecap="round" stroke-linejoin="round"/><path d="M45.5,642.5 L51.5,642.5 L51.5,656.5 L45.5,656.5 Z" fill="none" stroke="#d9dce0" stroke-width="2.2" stroke-linecap="round" stroke-linejoin="round"/><path d="M51.5,642.5 L56.5,632.5 Q61.5,632.5 60.5,638.5 L59.5,641.5 L66.5,641.5 Q70.5,641.5 69.5,645.5 L67.5,653.5 Q66.5,656.5 63.5,656.5 L51.5,656.5" fill="none" stroke="#d9dce0" stroke-width="2.2" stroke-linecap="round" stroke-linejoin="round"/><path d="M57.5,738 Q47.5,728 47.5,722 A10,10 0 0 1 67.5,722 Q67.5,728 57.5,738 Z" fill="none" stroke="#d9dce0" stroke-width="2.2" stroke-linecap="round" stroke-linejoin="round"/><circle cx="57.5" cy="722" r="3.6" fill="none" stroke="#d9dce0" stroke-width="2.2" stroke-linecap="round" stroke-linejoin="round"/><path d="M56.5,816 A11,11 0 1 0 68.5,828 L56.5,828 Z" fill="none" stroke="#d9dce0" stroke-width="2.2" stroke-linecap="round" stroke-linejoin="round"/><path d="M60.5,812 A10,10 0 0 1 70.5,822 L60.5,822 Z" fill="none" stroke="#d9dce0" stroke-width="2.2" stroke-linecap="round" stroke-linejoin="round"/><path d="M44.5,936.5 L70.5,936.5 M47.5,936.5 L47.5,912.5 L67.5,912.5 L67.5,936.5" fill="none" stroke="#d9dce0" stroke-width="2.2" stroke-linecap="round" stroke-linejoin="round"/><path d="M54.5,936.5 L54.5,929.5 L60.5,929.5 L60.5,936.5" fill="none" stroke="#d9dce0" stroke-width="2.2" stroke-linecap="round" stroke-linejoin="round"/><rect x="52.2" y="917.2" width="2.6" height="2.6" fill="#d9dce0"/><rect x="52.2" y="922.2" width="2.6" height="2.6" fill="#d9dce0"/><rect x="60.2" y="917.2" width="2.6" height="2.6" fill="#d9dce0"/><rect x="60.2" y="922.2" width="2.6" height="2.6" fill="#d9dce0"/><path d="M52.5,996 L57.5,991 L62.5,996 M55.0,998 L57.5,995.5 L60.0,998" fill="none" stroke="#d9dce0" stroke-width="2.2" stroke-linecap="round" stroke-linejoin="round" stroke-width="2"/><path d="M52.5,1014 L57.5,1019 L62.5,1014 M55.0,1012 L57.5,1014.5 L60.0,1012" fill="none" stroke="#d9dce0" stroke-width="2.2" stroke-linecap="round" stroke-linejoin="round" stroke-width="2"/><path d="M48.5,1000 L43.5,1005 L48.5,1010 M50.5,1002.5 L48.0,1005 L50.5,1007.5" fill="none" stroke="#d9dce0" stroke-width="2.2" stroke-linecap="round" stroke-linejoin="round" stroke-width="2"/><path d="M66.5,1000 L71.5,1005 L66.5,1010 M64.5,1002.5 L67.0,1005 L64.5,1007.5" fill="none" stroke="#d9dce0" stroke-width="2.2" stroke-linecap="round" stroke-linejoin="round" stroke-width="2"/><circle cx="57.5" cy="1005" r="2.2" fill="#d9dce0"/></svg>
<div class="t" style="left:27.25px;top:121.68px;font-size:15.5px;line-height:15.5px;color:#dcdfe3;-webkit-text-stroke:0.45px #dcdfe3;letter-spacing:0.514px;">Projekte</div>
<div class="t" style="left:21.00px;top:201.08px;font-size:15.5px;line-height:15.5px;color:#dcdfe3;-webkit-text-stroke:0.45px #dcdfe3;letter-spacing:-0.250px;">Recherche</div>
<div class="t" style="left:24.25px;top:282.08px;font-size:15.5px;line-height:15.5px;color:#dcdfe3;-webkit-text-stroke:0.45px #dcdfe3;letter-spacing:0.125px;">Backlinks</div>
<div class="t" style="left:38.40px;top:362.98px;font-size:15.5px;line-height:15.5px;color:#dcdfe3;-webkit-text-stroke:0.45px #dcdfe3;letter-spacing:0.725px;">Audit</div>
<div class="t" style="left:24.30px;top:443.88px;font-size:15.5px;line-height:15.5px;color:#dcdfe3;-webkit-text-stroke:0.45px #dcdfe3;letter-spacing:-0.212px;">AI Search</div>
<div class="t" style="left:28.30px;top:565.48px;font-size:15.5px;line-height:15.5px;color:#dcdfe3;-webkit-text-stroke:0.45px #dcdfe3;letter-spacing:0.683px;">Content</div>
<div class="t" style="left:21.35px;top:584.18px;font-size:15.5px;line-height:15.5px;color:#dcdfe3;-webkit-text-stroke:0.45px #dcdfe3;letter-spacing:0.525px;">Marketing</div>
<div class="t" style="left:38.75px;top:665.98px;font-size:15.5px;line-height:15.5px;color:#dcdfe3;-webkit-text-stroke:0.45px #dcdfe3;letter-spacing:0.650px;">SMM</div>
<div class="t" style="left:30.20px;top:746.98px;font-size:15.5px;line-height:15.5px;color:#dcdfe3;-webkit-text-stroke:0.45px #dcdfe3;letter-spacing:0.200px;">Lokales</div>
<div class="t" style="left:21.25px;top:765.48px;font-size:15.5px;line-height:15.5px;color:#dcdfe3;-webkit-text-stroke:0.45px #dcdfe3;letter-spacing:0.550px;">Marketing</div>
<div class="t" style="left:28.50px;top:846.38px;font-size:15.5px;line-height:15.5px;color:#dcdfe3;-webkit-text-stroke:0.45px #dcdfe3;letter-spacing:0.657px;">Bericht-</div>
<div class="t" style="left:22.70px;top:864.08px;font-size:15.5px;line-height:15.5px;color:#dcdfe3;-webkit-text-stroke:0.45px #dcdfe3;letter-spacing:0.267px;">erstellung</div>
<div class="t" style="left:9.10px;top:945.88px;font-size:15.5px;line-height:15.5px;color:#dcdfe3;-webkit-text-stroke:0.45px #dcdfe3;letter-spacing:0.418px;">Agenturpaket</div>
<div class="t" style="left:45.25px;top:1027.08px;font-size:15.5px;line-height:15.5px;color:#dcdfe3;-webkit-text-stroke:0.45px #dcdfe3;letter-spacing:-0.250px;">API</div>
<div class="a" style="left:19px;top:469.5px;width:78px;height:31.5px;background:#def4e6;border-radius:6px;"></div>
<div class="t" style="left:42.45px;top:478.68px;font-size:15.5px;line-height:15.5px;color:#35ad74;-webkit-text-stroke:0.5px #35ad74;letter-spacing:-0.200px;">New</div>
<div class="a" style="left:31px;top:1293px;width:53px;height:53px;background:#fbfbfd;border-radius:7px;box-shadow:inset 0 0 1px 1px rgba(180,185,200,0.5);"></div>
<svg class="a" style="left:0px;top:0px;" width="121" height="1364" viewBox="0 0 121 1364"><circle cx="77.9" cy="1339.4" r="12.2" fill="#26303c"/><circle cx="77.9" cy="1339.4" r="2.9" fill="none" stroke="#eef0f2" stroke-width="1.7"/><path d="M75.97,1333.09 L76.20,1330.66 L79.60,1330.66 L79.83,1333.09 L82.40,1334.57 L84.62,1333.56 L86.32,1336.50 L84.33,1337.92 L84.33,1340.88 L86.32,1342.30 L84.62,1345.24 L82.40,1344.23 L79.83,1345.71 L79.60,1348.14 L76.20,1348.14 L75.97,1345.71 L73.40,1344.23 L71.18,1345.24 L69.48,1342.30 L71.47,1340.88 L71.47,1337.92 L69.48,1336.50 L71.18,1333.56 L73.40,1334.57 Z" fill="none" stroke="#eef0f2" stroke-width="1.7" stroke-linejoin="round"/></svg>
<div class="a" style="left:122px;top:58px;width:330px;height:1306px;background:#26303c;"></div>
<div class="t" style="left:141.50px;top:82.68px;font-size:22px;line-height:22px;color:#ffffff;font-weight:700;letter-spacing:-0.300px;">Projekte</div>
<div class="a" style="left:134px;top:133px;width:306px;height:63px;background:#fff;border-radius:9px;box-shadow:0 6px 10px rgba(0,0,0,0.12);"></div>
<svg class="a" style="left:0px;top:0px;" width="452" height="200" viewBox="0 0 452 200"><rect x="153" y="152" width="25" height="25" fill="#e8141b"/><path d="M156.5,159.5 Q163,161 169,164.8" fill="none" stroke="#fff" stroke-width="3.4" stroke-linecap="round"/><path d="M169,164.8 Q171.5,160 176.3,157.6" fill="none" stroke="#fff" stroke-width="2.1" stroke-linecap="round"/><path d="M169,164.8 Q171,168.5 173.4,171.8" fill="none" stroke="#fff" stroke-width="2.4" stroke-linecap="round"/><path d="M155,162.5 L157.5,160 L155.5,158 L157.5,157 Z" fill="#fff" stroke="#fff" stroke-width="1" stroke-linejoin="round"/><path d="M404.5,160.5 L408.5,156.5 L412.5,160.5 M404.5,167 L408.5,171 L412.5,167" fill="none" stroke="#3b4550" stroke-width="2" stroke-linecap="round" stroke-linejoin="round"/></svg>
<div class="t" style="left:186.90px;top:153.88px;font-size:22px;line-height:22px;color:#47525e;letter-spacing:-0.900px;">Puma</div>
<div class="t" style="left:185.20px;top:250.25px;font-size:22.5px;line-height:22.5px;color:#d5d9de;letter-spacing:-0.108px;">Alle Projekte</div>
<div class="t" style="left:185.20px;top:312.65px;font-size:22.5px;line-height:22.5px;color:#d5d9de;letter-spacing:0.247px;">Projektübersicht</div>
<div class="t" style="left:185.20px;top:375.45px;font-size:22.5px;line-height:22.5px;color:#d5d9de;letter-spacing:-0.614px;">Rankings</div>
<div class="t" style="left:185.20px;top:592.45px;font-size:22.5px;line-height:22.5px;color:#d5d9de;letter-spacing:0.033px;">Analytics &amp; Traffic</div>
<div class="t" style="left:185.20px;top:654.75px;font-size:22.5px;line-height:22.5px;color:#d5d9de;letter-spacing:0.200px;">Meine Mitbewerber</div>
<div class="t" style="left:185.20px;top:805.55px;font-size:22.5px;line-height:22.5px;color:#d5d9de;letter-spacing:-0.375px;">Einblicke</div>
<div class="t" style="left:185.20px;top:867.75px;font-size:22.5px;line-height:22.5px;color:#d5d9de;letter-spacing:-0.240px;">Backlink-Analyse</div>
<div class="t" style="left:185.20px;top:930.25px;font-size:22.5px;line-height:22.5px;color:#d5d9de;letter-spacing:0.117px;">Marketingplan</div>
<div class="t" style="left:185.20px;top:992.85px;font-size:22.5px;line-height:22.5px;color:#d5d9de;letter-spacing:0.175px;">Website-Audit</div>
<div class="t" style="left:185.20px;top:717.55px;font-size:22.5px;line-height:22.5px;color:#d5d9de;letter-spacing:-0.409px;">AI Overviews</div>
<div class="t" style="left:185.20px;top:742.75px;font-size:22.5px;line-height:22.5px;color:#d5d9de;letter-spacing:-0.483px;">Tracker</div>
<div class="a" style="left:338px;top:726px;width:52px;height:31px;background:#e6eefb;border-radius:6px;"></div>
<div class="t" style="left:348.50px;top:735.73px;font-size:14.5px;line-height:14.5px;color:#1c6fd3;font-weight:700;letter-spacing:-0.133px;">Beta</div>
<div class="t" style="left:185.20px;top:1055.05px;font-size:22.5px;line-height:22.5px;color:#d5d9de;letter-spacing:0.262px;">Monitoring der</div>
<div class="t" style="left:185.20px;top:1079.15px;font-size:22.5px;line-height:22.5px;color:#d5d9de;letter-spacing:-0.393px;">Seitenänderungen</div>
<div class="t" style="left:185.20px;top:1140.75px;font-size:22.5px;line-height:22.5px;color:#d5d9de;letter-spacing:-0.075px;">Backlink-</div>
<div class="t" style="left:185.20px;top:1166.35px;font-size:22.5px;line-height:22.5px;color:#d5d9de;letter-spacing:-0.280px;">Überwachung</div>
<div class="a" style="left:166px;top:414px;width:274px;height:50px;background:#4f6070;border-radius:7px;"></div>
<div class="t" style="left:212.90px;top:428.78px;font-size:22px;line-height:22px;color:#ffffff;letter-spacing:-1.079px;">Zusammenfassung</div>
<div class="t" style="left:212.90px;top:478.38px;font-size:22px;line-height:22px;color:#d5d9de;letter-spacing:-0.700px;">Details</div>
<div class="t" style="left:212.90px;top:528.18px;font-size:22px;line-height:22px;color:#d5d9de;letter-spacing:-0.644px;">Historische Daten</div>
<svg class="a" style="left:0px;top:0px;" width="452" height="1364" viewBox="0 0 452 1364"><path d="M149,259.3 L159,250.3 L169,259.3 L169,270.3 Q169,272.3 167,272.3 L151,272.3 Q149,272.3 149,270.3 Z" fill="none" stroke="#9ba4ac" stroke-width="2" stroke-linecap="round" stroke-linejoin="round"/><path d="M155,272.3 L155,264.3 L163,264.3 L163,272.3" fill="none" stroke="#9ba4ac" stroke-width="2" stroke-linecap="round" stroke-linejoin="round"/><rect x="150" y="314.7" width="7" height="10" fill="none" stroke="#9ba4ac" stroke-width="2" stroke-linecap="round" stroke-linejoin="round"/><rect x="161" y="314.7" width="7" height="5" fill="none" stroke="#9ba4ac" stroke-width="2" stroke-linecap="round" stroke-linejoin="round"/><rect x="150" y="327.7" width="7" height="5" fill="none" stroke="#9ba4ac" stroke-width="2" stroke-linecap="round" stroke-linejoin="round"/><rect x="161" y="322.7" width="7" height="10" fill="none" stroke="#9ba4ac" stroke-width="2" stroke-linecap="round" stroke-linejoin="round"/><path d="M152.2,394.7 L152.2,390.5 M159,394.7 L159,384.0 M165.6,394.7 L165.6,377.5" fill="none" stroke="#9ba4ac" stroke-width="2" stroke-linecap="round" stroke-linejoin="round" stroke-width="1.9" stroke-linecap="butt"/><path d="M409,389.5 L415,383.5 L421,389.5" fill="none" stroke="#e8eaed" stroke-width="2" stroke-linecap="round" stroke-linejoin="round"/><path d="M148,604.5 L153,604.5 L157,593.5 L162,613.5 L165,604.5 L170,604.5" fill="none" stroke="#9ba4ac" stroke-width="2" stroke-linecap="round" stroke-linejoin="round"/><path d="M409,600.5 L415,606.5 L421,600.5" fill="none" stroke="#8c959e" stroke-width="2" stroke-linecap="round" stroke-linejoin="round"/><circle cx="159" cy="665.8" r="3" fill="none" stroke="#9ba4ac" stroke-width="2" stroke-linecap="round" stroke-linejoin="round"/><path d="M153,676.8 Q153,669.8 159,669.8 Q165,669.8 165,676.8" fill="none" stroke="#9ba4ac" stroke-width="2" stroke-linecap="round" stroke-linejoin="round"/><circle cx="151.5" cy="657.8" r="2.2" fill="none" stroke="#9ba4ac" stroke-width="2" stroke-linecap="round" stroke-linejoin="round"/><circle cx="166.5" cy="657.8" r="2.2" fill="none" stroke="#9ba4ac" stroke-width="2" stroke-linecap="round" stroke-linejoin="round"/><path d="M147,669.8 Q147,662.8 152,662.8" fill="none" stroke="#9ba4ac" stroke-width="2" stroke-linecap="round" stroke-linejoin="round"/><path d="M171,669.8 Q171,662.8 166,662.8" fill="none" stroke="#9ba4ac" stroke-width="2" stroke-linecap="round" stroke-linejoin="round"/><path d="M409,662.8 L415,668.8 L421,662.8" fill="none" stroke="#8c959e" stroke-width="2" stroke-linecap="round" stroke-linejoin="round"/><path d="M148,823.6 L155,815.6 L160,820.6 L169,810.6" fill="none" stroke="#9ba4ac" stroke-width="2" stroke-linecap="round" stroke-linejoin="round"/><path d="M150,810.6 L150,814.6 M148,812.6 L152,812.6" fill="none" stroke="#9ba4ac" stroke-width="2" stroke-linecap="round" stroke-linejoin="round" stroke-width="1.5"/><path d="M164,804.6 L164,810.6 M161,807.6 L167,807.6" fill="none" stroke="#9ba4ac" stroke-width="2" stroke-linecap="round" stroke-linejoin="round" stroke-width="1.5"/><g transform="translate(148,867.8) scale(0.92)"><path d="M10 13a5 5 0 0 0 7.54.54l3-3a5 5 0 0 0-7.07-7.07l-1.72 1.71" fill="none" stroke="#9ba4ac" stroke-width="2" stroke-linecap="round" stroke-linejoin="round" stroke-width="2.1"/><path d="M14 11a5 5 0 0 0-7.54-.54l-3 3a5 5 0 0 0 7.07 7.07l1.71-1.71" fill="none" stroke="#9ba4ac" stroke-width="2" stroke-linecap="round" stroke-linejoin="round" stroke-width="2.1"/></g><path d="M152,936.3 L155,939.3 L161,931.3" fill="none" stroke="#9ba4ac" stroke-width="2" stroke-linecap="round" stroke-linejoin="round"/><path d="M151,944.3 L166,944.3 M151,949.3 L162,949.3" fill="none" stroke="#9ba4ac" stroke-width="2" stroke-linecap="round" stroke-linejoin="round"/><rect x="149" y="992.9" width="20" height="21" rx="1.5" fill="none" stroke="#9ba4ac" stroke-width="2" stroke-linecap="round" stroke-linejoin="round"/><circle cx="158.5" cy="1002.4" r="4.2" fill="none" stroke="#9ba4ac" stroke-width="2" stroke-linecap="round" stroke-linejoin="round"/><line x1="161.5" y1="1005.4" x2="164" y2="1007.9" fill="none" stroke="#9ba4ac" stroke-width="2" stroke-linecap="round" stroke-linejoin="round"/><path d="M409,1000.9 L415,1006.9 L421,1000.9" fill="none" stroke="#8c959e" stroke-width="2" stroke-linecap="round" stroke-linejoin="round"/><path d="M155.03,736.13 A4.6,4.6 0 1 1 163.77,736.13 A4.6,4.6 0 1 1 163.77,744.87 A4.6,4.6 0 1 1 155.03,744.87 A4.6,4.6 0 1 1 155.03,736.13 Z" fill="none" stroke="#9ba4ac" stroke-width="2" stroke-linecap="round" stroke-linejoin="round" stroke-width="1.9"/><path d="M159.4,736.3 Q160.20000000000002,739.7 163.6,740.5 Q160.20000000000002,741.3 159.4,744.7 Q158.6,741.3 155.20000000000002,740.5 Q158.6,739.7 159.4,736.3 Z" fill="#9ba4ac"/><path d="M409,738 L415,744 L421,738" fill="none" stroke="#8c959e" stroke-width="2" stroke-linecap="round" stroke-linejoin="round"/><path d="M157,1068 L151,1068 Q149,1068 149,1070 L149,1086 Q149,1088 151,1088 L157,1088" fill="none" stroke="#9ba4ac" stroke-width="2" stroke-linecap="round" stroke-linejoin="round"/><path d="M162,1068 L167,1068 Q169,1068 169,1070 L169,1086 Q169,1088 167,1088 L162,1088" fill="none" stroke="#9ba4ac" stroke-width="2" stroke-linecap="round" stroke-linejoin="round"/><path d="M157,1065 L157,1091" fill="none" stroke="#9ba4ac" stroke-width="2" stroke-linecap="round" stroke-linejoin="round"/><path d="M156,1160 L153,1160 A5,5 0 0 0 153,1170 L156,1170 M162,1160 L165,1160 A5,5 0 0 1 165,1170 L162,1170 M154,1165 L164,1165" fill="none" stroke="#9ba4ac" stroke-width="2" stroke-linecap="round" stroke-linejoin="round"/><path d="M409,1161 L415,1167 L421,1161" fill="none" stroke="#8c959e" stroke-width="2" stroke-linecap="round" stroke-linejoin="round"/><circle cx="186" cy="438.6" r="3.2" fill="#fff"/><circle cx="185.5" cy="488.6" r="1.6" fill="#9aa2aa"/><circle cx="185.5" cy="538.6" r="1.6" fill="#9aa2aa"/></svg>
<svg class="a" style="left:0px;top:0px;" width="480" height="120" viewBox="0 0 480 120"><circle cx="452.7" cy="92" r="18.3" fill="#26303c" stroke="#3e4856" stroke-width="1.2"/><path d="M455,86.5 L449.5,92 L455,97.5" fill="none" stroke="#fff" stroke-width="2.2" stroke-linecap="round" stroke-linejoin="round"/></svg>
<script>(function(){var w=window.innerWidth;if(w&&Math.abs(w-2560)>2){document.documentElement.style.zoom=(w/2560);}})();</script>
</body></html>
